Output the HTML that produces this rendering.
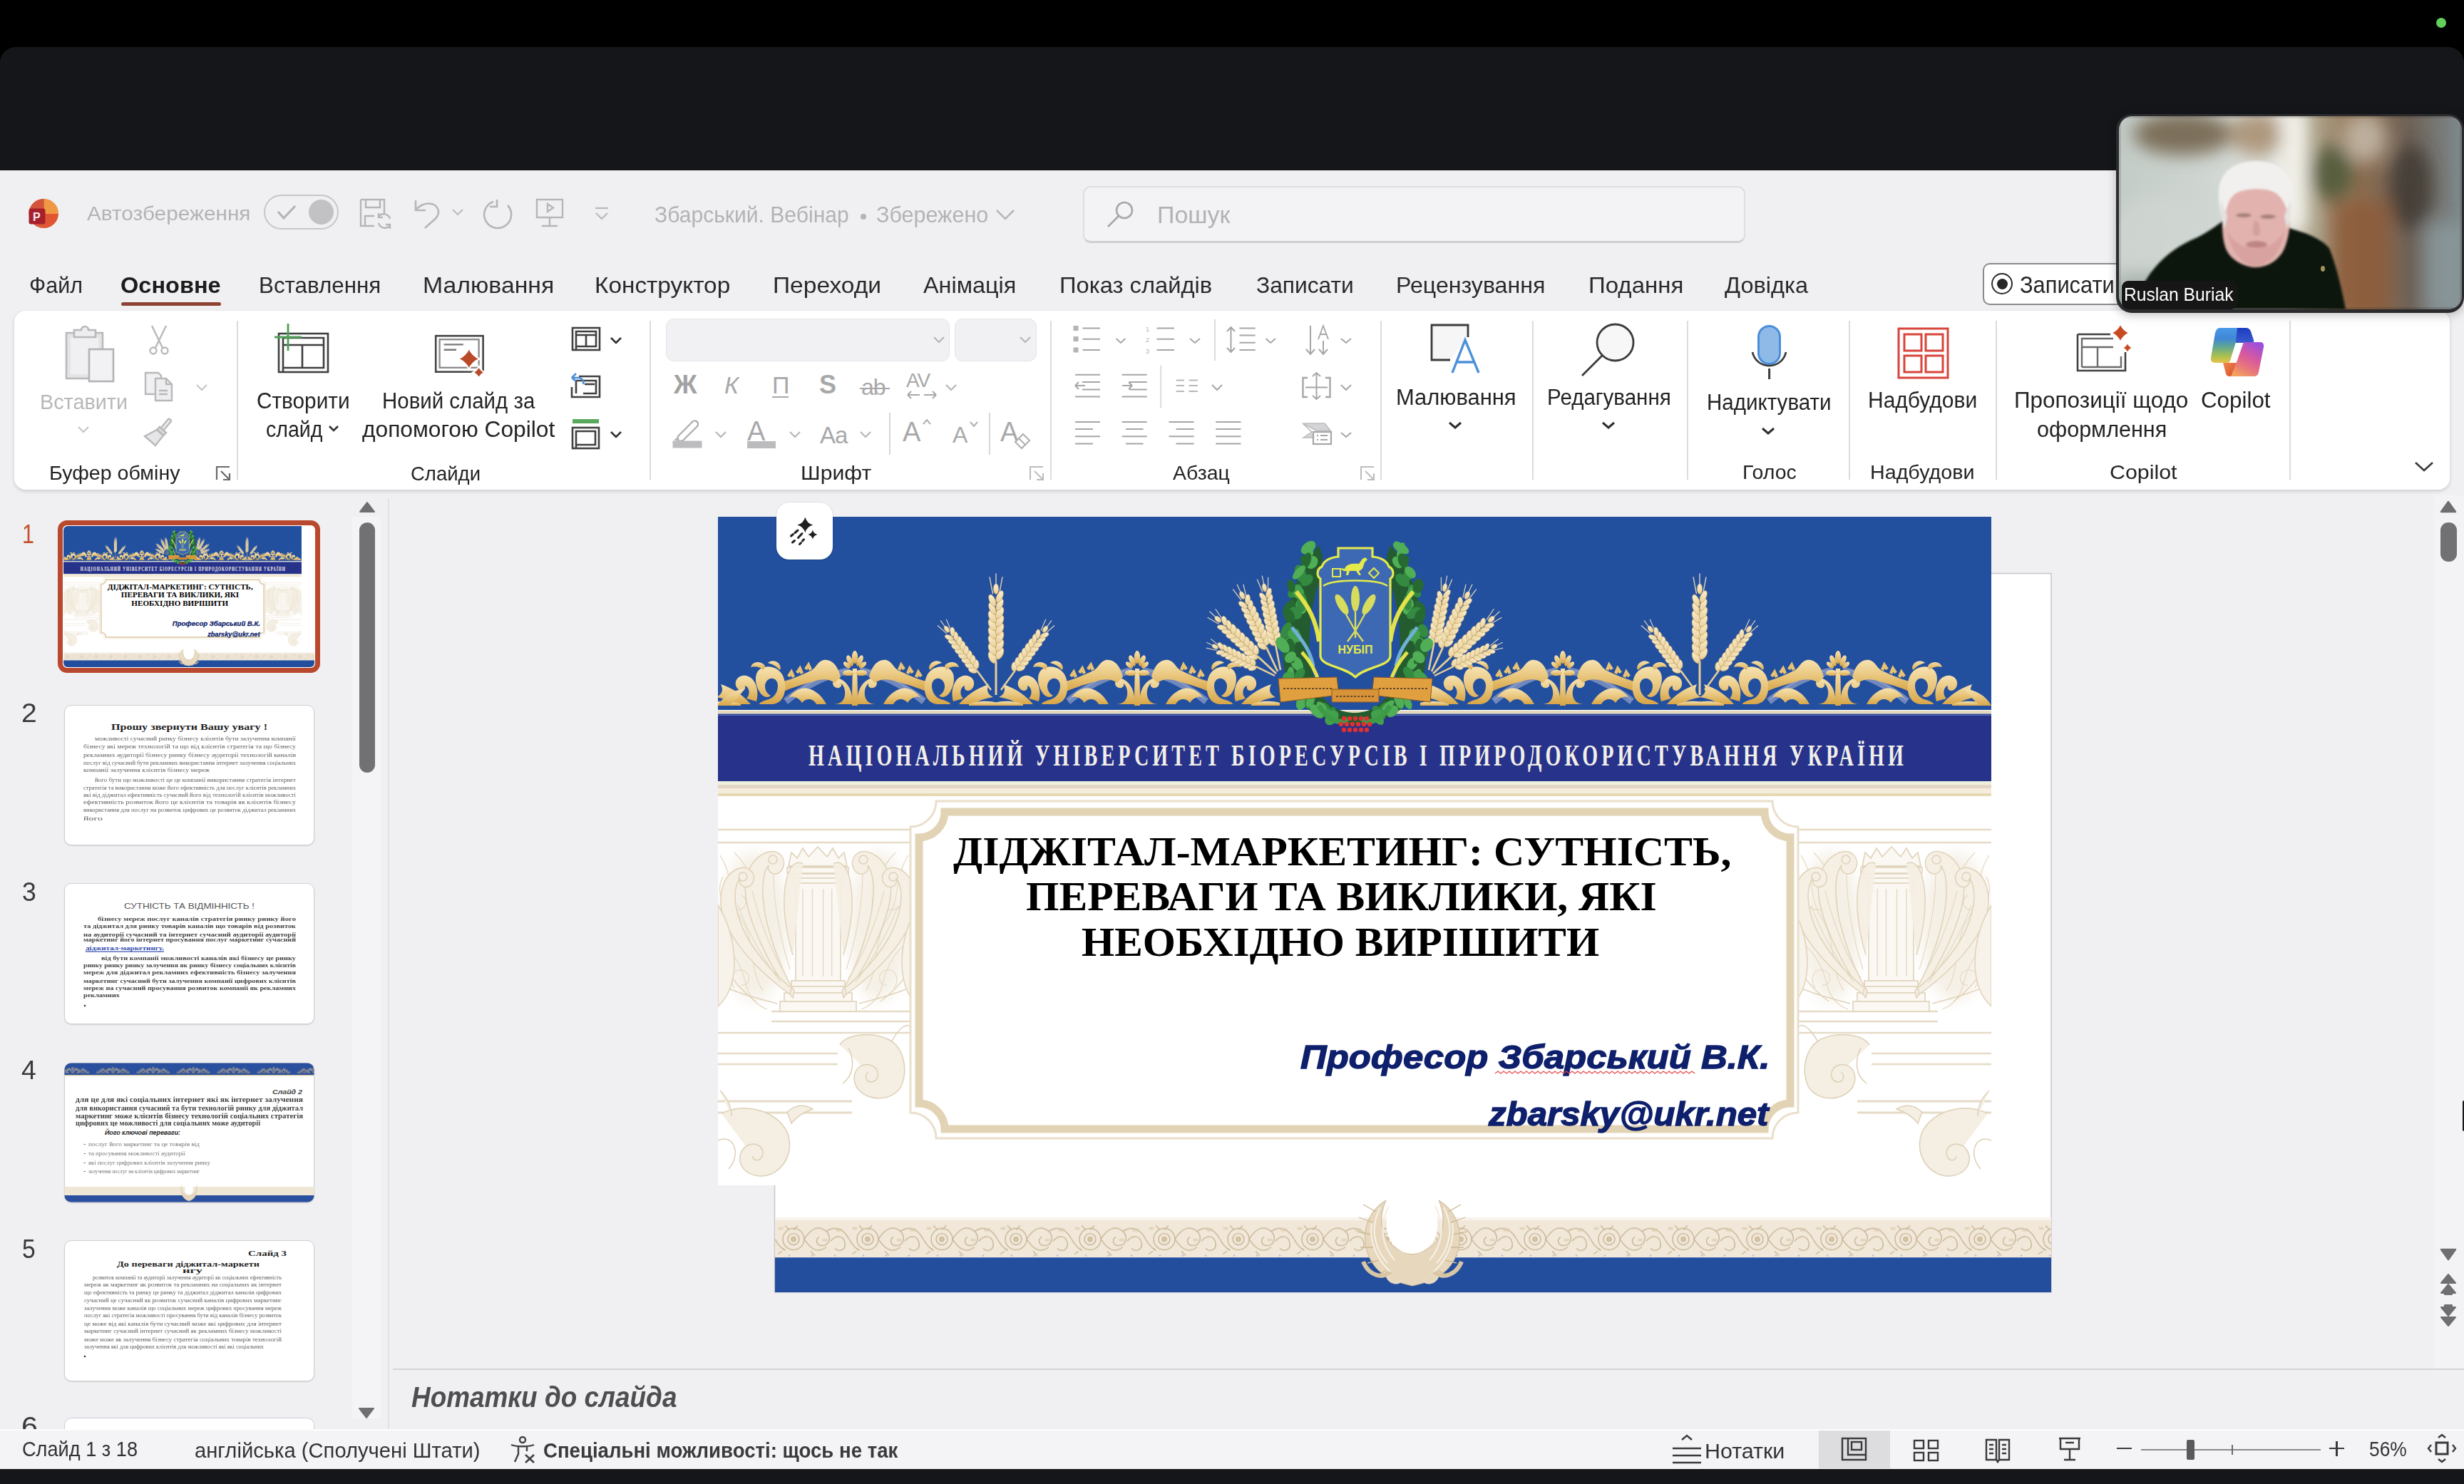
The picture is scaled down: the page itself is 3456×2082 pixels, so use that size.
<!DOCTYPE html>
<html><head><meta charset="utf-8">
<style>
*{margin:0;padding:0;box-sizing:border-box}
html,body{width:3456px;height:2082px;overflow:hidden;background:#000;font-family:"Liberation Sans",sans-serif;position:relative}
.a{position:absolute}
.t{position:absolute;white-space:nowrap;line-height:1;transform-origin:0 0}
svg{position:absolute;overflow:visible}
</style></head><body>
<div class="a" style="left:0;top:0;width:3456px;height:66px;background:#000"></div>
<div class="a" style="left:3417px;top:25px;width:14px;height:14px;border-radius:50%;background:#62d05a"></div>
<div class="a" style="left:0;top:66px;width:3456px;height:2016px;background:#15161a;border-radius:22px 22px 0 0"></div>
<div class="a" style="left:0;top:239px;width:3456px;height:1822px;background:#f0eff2"></div>
<!-- PowerPoint logo -->
<svg style="left:38px;top:277px" width="46" height="46" viewBox="0 0 46 46">
<defs><clipPath id="lc"><circle cx="23.2" cy="22.5" r="20.6"/></clipPath></defs>
<g clip-path="url(#lc)">
<rect x="0" y="0" width="46" height="46" fill="#dc5a3a"/>
<rect x="23.5" y="0" width="23" height="23" fill="#f09945"/>
<rect x="23.5" y="23" width="23" height="23" fill="#e05633"/>
<rect x="0" y="0" width="23.5" height="23" fill="#d2553a"/>
</g>
<rect x="2.5" y="15.5" width="23" height="22" rx="3" fill="#a6202b"/>
<text x="8" y="32.5" font-family="Liberation Sans" font-weight="bold" font-size="16" fill="#fbeff2">P</text>
</svg>
<!-- autosave toggle -->
<div class="a" style="left:370px;top:273px;width:105px;height:49px;border:2.5px solid #c6c6c8;border-radius:25px"></div>
<svg style="left:386px;top:285px" width="32" height="26"><path d="M4 12 L12 21 L28 4" fill="none" stroke="#b4b4b6" stroke-width="3.2"/></svg>
<div class="a" style="left:432.5px;top:279.5px;width:35px;height:35px;border-radius:50%;background:#c2c2c4"></div>
<!-- save icon -->
<svg style="left:503px;top:277px" width="48" height="46" viewBox="0 0 48 46" fill="none" stroke="#b6b6b8" stroke-width="2.4">
<path d="M3 3 H36 V22 M3 3 V40 H22"/><path d="M10 3 V14 H30 V3"/><path d="M9 40 V26 H22"/>
<path d="M44 30 A9 9 0 0 0 28 27"/><path d="M28 22 V28 H34"/><path d="M28 36 A9 9 0 0 0 44 39"/><path d="M44 44 V38 H38"/>
</svg>
<!-- undo -->
<svg style="left:579px;top:277px" width="44" height="46" viewBox="0 0 44 46" fill="none" stroke="#b6b6b8" stroke-width="2.6">
<path d="M4 4 V18 H18"/><path d="M4 18 C12 6 34 4 36 20 C37 28 26 34 17 43"/>
</svg>
<svg style="left:632px;top:291px" width="20" height="14"><path d="M3 3 L10 10 L17 3" fill="none" stroke="#bdbdbf" stroke-width="2.2"/></svg>
<!-- redo -->
<svg style="left:676px;top:277px" width="46" height="46" viewBox="0 0 46 46" fill="none" stroke="#b6b6b8" stroke-width="2.6">
<path d="M16 6 A19 19 0 1 0 36 11"/><path d="M21 3 V13 H11"/>
</svg>
<!-- present -->
<svg style="left:750px;top:277px" width="42" height="44" viewBox="0 0 42 44" fill="none" stroke="#b6b6b8" stroke-width="2.4">
<rect x="3" y="3" width="36" height="25"/><path d="M18 9 V20 L26 14.5 Z"/><path d="M21 28 V40 M10 40 H32"/>
</svg>
<!-- customize -->
<svg style="left:832px;top:288px" width="24" height="24" viewBox="0 0 24 24" fill="none" stroke="#b9b9bb" stroke-width="2.2">
<path d="M3 4 H21"/><path d="M4 11 L12 19 L20 11"/>
</svg>
<!-- title dot & chevron -->
<div class="a" style="left:1207px;top:300px;width:8px;height:8px;border-radius:50%;background:#b4b4b6"></div>
<svg style="left:1395px;top:292px" width="30" height="18"><path d="M3 3 L15 15 L27 3" fill="none" stroke="#b6b6b8" stroke-width="2.6"/></svg>
<!-- search box -->
<div class="a" style="left:1519px;top:261px;width:929px;height:80px;background:#f3f2f5;border:2px solid #dedde1;border-bottom:3px solid #cfced2;border-radius:11px"></div>
<svg style="left:1551px;top:281px" width="42" height="40" viewBox="0 0 42 40" fill="none" stroke="#a8a8aa" stroke-width="2.6">
<circle cx="26" cy="14" r="11"/><path d="M18 22 L3 37"/>
</svg>
<!-- record button -->
<div class="a" style="left:2781px;top:368.5px;width:240px;height:59px;background:#fff;border:2px solid #8a8a8c;border-radius:10px"></div>
<div class="a" style="left:2793px;top:383px;width:30px;height:30px;border-radius:50%;border:2.4px solid #2a2a2a"></div>
<div class="a" style="left:2800.5px;top:390.5px;width:15px;height:15px;border-radius:50%;background:#262626"></div>
<!-- tab underline -->
<div class="a" style="left:170px;top:423.5px;width:140px;height:5.5px;border-radius:3px;background:#8e4434"></div>

<div class="a" style="left:20px;top:436px;width:3416px;height:251px;background:#fff;border-radius:16px;box-shadow:0 2px 5px rgba(0,0,0,.16)"></div>
<!-- separators -->
<div class="a" style="left:331.5px;top:450px;width:2px;height:223px;background:#dcdcde"></div>
<div class="a" style="left:911px;top:450px;width:2px;height:223px;background:#dcdcde"></div>
<div class="a" style="left:1473px;top:450px;width:2px;height:223px;background:#dcdcde"></div>
<div class="a" style="left:1936px;top:450px;width:2px;height:223px;background:#dcdcde"></div>
<div class="a" style="left:2149px;top:450px;width:2px;height:223px;background:#dcdcde"></div>
<div class="a" style="left:2366px;top:450px;width:2px;height:223px;background:#dcdcde"></div>
<div class="a" style="left:2593px;top:450px;width:2px;height:223px;background:#dcdcde"></div>
<div class="a" style="left:2799px;top:450px;width:2px;height:223px;background:#dcdcde"></div>
<div class="a" style="left:3211px;top:450px;width:2px;height:223px;background:#dcdcde"></div>
<!-- clipboard: paste -->
<svg style="left:88px;top:456px" width="76" height="84" viewBox="0 0 76 84">
<path d="M5 11 H56 V75 H5 Z" fill="#e4e4e6" stroke="#b9b9bb" stroke-width="2.6"/>
<path d="M11 17 H50 V69 H11 Z" fill="#f0f0f2" stroke="none"/>
<path d="M16 7 H26 A5 5 0 0 1 36 7 H46 V17 H16 Z" fill="#eeeef0" stroke="#b9b9bb" stroke-width="2.6"/>
<rect x="37" y="34" width="34" height="45" fill="#f2f2f4" stroke="#b3b3b5" stroke-width="2.6"/>
</svg>
<svg style="left:106px;top:596px" width="22" height="16"><path d="M4 3 L11 10 L18 3" fill="none" stroke="#c4c4c6" stroke-width="2"/></svg>
<!-- cut -->
<svg style="left:206px;top:454px" width="34" height="46" viewBox="0 0 34 46" fill="none" stroke="#b9b9bb" stroke-width="2.4">
<path d="M7 3 L22 34 M27 3 L12 34"/><circle cx="9" cy="38" r="4.5"/><circle cx="25" cy="38" r="4.5"/>
</svg>
<!-- copy -->
<svg style="left:200px;top:520px" width="46" height="46" viewBox="0 0 46 46" stroke="#b9b9bb" stroke-width="2.4">
<path d="M4 3 H22 L26 7 V33 H4 Z" fill="#f0f0f2"/>
<path d="M18 11 H33 L41 19 V42 H18 Z" fill="#eeeef0"/><path d="M33 11 V19 H41" fill="none"/>
<path d="M23 28 H35 M23 33 H35" fill="none"/>
</svg>
<svg style="left:272px;top:537px" width="22" height="16"><path d="M4 3 L11 10 L18 3" fill="none" stroke="#c4c4c6" stroke-width="2"/></svg>
<!-- format painter -->
<svg style="left:200px;top:585px" width="46" height="44" viewBox="0 0 46 44" stroke="#b9b9bb" stroke-width="2.4">
<path d="M30 18 L40 6 A3 3 0 0 0 36 3 L26 15" fill="#eeeef0"/>
<path d="M24 14 L33 22 L29 26 L20 18 Z" fill="#dadadc"/>
<path d="M20 18 L29 26 L18 40 L3 27 Z" fill="#e6e6e8"/>
</svg>
<!-- dialog launcher clipboard -->
<svg style="left:302px;top:653px" width="24" height="24" viewBox="0 0 24 24" fill="none" stroke="#6a6a6c" stroke-width="2.2"><path d="M2 20 V2 H20"/><path d="M8 8 L20 20 M11 20 H20 V11"/></svg>

<!-- new slide -->
<svg style="left:383px;top:452px" width="82" height="74" viewBox="0 0 82 74" fill="none" stroke="#404042" stroke-width="2.6">
<rect x="8" y="16" width="69" height="54"/><path d="M14 70 V22 H71 V64 H14"/><path d="M14 32 H71 M41 32 V64"/>
<path d="M21 2 V40 M2 21 H40" stroke="#4fa056" stroke-width="2.8"/>
</svg>
<svg style="left:458px;top:595px" width="22" height="16"><path d="M4 3 L10 9 L16 3" fill="none" stroke="#303032" stroke-width="2.6"/></svg>
<!-- copilot new slide -->
<svg style="left:606px;top:466px" width="80" height="70" viewBox="0 0 80 70">
<rect x="5.2" y="5.2" width="66.4" height="50.5" fill="none" stroke="#454547" stroke-width="2.6"/>
<rect x="10.6" y="10.2" width="55" height="39.6" fill="none" stroke="#8a8a8c" stroke-width="2.3"/>
<path d="M16.6 17.4 H43.8 M16.6 24.8 H34" stroke="#7a7a7c" stroke-width="2.4"/>
<path d="M51.8 22.4 Q56.3 32.9 66.8 37.4 Q56.3 41.9 51.8 52.4 Q47.3 41.9 36.8 37.4 Q47.3 32.9 51.8 22.4 Z" fill="#b84a2a" stroke="#fff" stroke-width="2.2"/>
<path d="M65.6 47.8 Q68.1 53.8 74.1 56.3 Q68.1 58.8 65.6 64.8 Q63.0 58.8 57.099999999999994 56.3 Q63.0 53.8 65.6 47.8 Z" fill="#b84a2a" stroke="#fff" stroke-width="2"/>
</svg>
<!-- layout -->
<svg style="left:800px;top:457px" width="46" height="38" viewBox="0 0 46 38" fill="none" stroke="#404042" stroke-width="2.6">
<rect x="3" y="3" width="38" height="31"/><path d="M8 34 V8 H36 V29 H8 M8 13 H36 M22 13 V29"/>
</svg>
<svg style="left:853px;top:471px" width="22" height="16"><path d="M4 3 L11 10 L18 3" fill="none" stroke="#303032" stroke-width="2.6"/></svg>
<!-- reset -->
<svg style="left:798px;top:519px" width="48" height="42" viewBox="0 0 48 42" fill="none" stroke="#404042" stroke-width="2.6">
<path d="M14 9 H43 V38 H4 V24"/><path d="M10 33 V15 H38 V33 H20"/><path d="M22 20 H36"/>
<path d="M4 11 L10 5 M4 11 L10 16 M4 11 H14 A7 7 0 0 1 20 20" stroke="#4c8fd6" stroke-width="2.6"/>
</svg>
<!-- section -->
<svg style="left:800px;top:586px" width="44" height="46" viewBox="0 0 44 46" fill="none" stroke="#404042" stroke-width="2.6">
<path d="M3 5 H40" stroke="#5aa85e" stroke-width="6"/><rect x="3" y="14" width="37" height="29"/><path d="M8 43 V19 H35 V38 H8"/>
</svg>
<svg style="left:853px;top:603px" width="22" height="16"><path d="M4 3 L11 10 L18 3" fill="none" stroke="#303032" stroke-width="2.6"/></svg>

<!-- font boxes -->
<div class="a" style="left:934px;top:447px;width:398px;height:60px;background:#f1f0f3;border:1.5px solid #e4e3e7;border-radius:11px"></div>
<svg style="left:1306px;top:470px" width="22" height="16"><path d="M4 3 L11 10 L18 3" fill="none" stroke="#b6b6b8" stroke-width="2.2"/></svg>
<div class="a" style="left:1339px;top:447px;width:115px;height:60px;background:#f1f0f3;border:1.5px solid #e4e3e7;border-radius:11px"></div>
<svg style="left:1427px;top:470px" width="22" height="16"><path d="M4 3 L11 10 L18 3" fill="none" stroke="#b6b6b8" stroke-width="2.2"/></svg>
<!-- row 2 font -->
<div class="t" style="left:945px;top:522px;font-size:36px;font-weight:bold;color:#a2a2a4">Ж</div>
<div class="t" style="left:1016px;top:523px;font-size:34px;font-style:italic;color:#a8a8aa">К</div>
<div class="t" style="left:1083px;top:523px;font-size:34px;color:#a8a8aa">П</div>
<div class="a" style="left:1083px;top:555.5px;width:23px;height:2.4px;background:#a8a8aa"></div>
<div class="t" style="left:1149px;top:522px;font-size:36px;font-weight:bold;color:#a8a8aa">S</div>
<div class="t" style="left:1208px;top:527px;font-size:32px;color:#a8a8aa;letter-spacing:-1px">ab</div>
<div class="a" style="left:1206px;top:544px;width:42px;height:2.4px;background:#a8a8aa"></div>
<div class="t" style="left:1271px;top:520px;font-size:28px;color:#a8a8aa;letter-spacing:-1px">AV</div>
<svg style="left:1270px;top:546px" width="46" height="16" viewBox="0 0 46 16" fill="none" stroke="#a8a8aa" stroke-width="2"><path d="M3 8 H20 M3 8 L8 3 M3 8 L8 13 M26 8 H43 M43 8 L38 3 M43 8 L38 13"/></svg>
<svg style="left:1323px;top:537px" width="22" height="16"><path d="M4 3 L11 10 L18 3" fill="none" stroke="#b6b6b8" stroke-width="2.2"/></svg>
<!-- row 3 font -->
<svg style="left:941px;top:586px" width="46" height="44" viewBox="0 0 46 44">
<path d="M10 26 L30 6 A4 4 0 0 1 37 12 L17 32 L10 34 Z" fill="none" stroke="#b0b0b2" stroke-width="2.4"/>
<path d="M10 26 L4 32 L12 32 Z" fill="#b6b6b8"/>
<rect x="2.5" y="32.5" width="41" height="10" fill="#bcbcbe"/>
</svg>
<svg style="left:1000px;top:603px" width="22" height="16"><path d="M4 3 L11 10 L18 3" fill="none" stroke="#b6b6b8" stroke-width="2.2"/></svg>
<div class="t" style="left:1048px;top:586px;font-size:38px;color:#a8a8aa">A</div>
<div class="a" style="left:1047.5px;top:618.5px;width:40px;height:10px;background:#bcbcbe"></div>
<svg style="left:1104px;top:603px" width="22" height="16"><path d="M4 3 L11 10 L18 3" fill="none" stroke="#b6b6b8" stroke-width="2.2"/></svg>
<div class="t" style="left:1150px;top:594px;font-size:33px;color:#a8a8aa;letter-spacing:-1px">Aa</div>
<svg style="left:1203px;top:603px" width="22" height="16"><path d="M4 3 L11 10 L18 3" fill="none" stroke="#b6b6b8" stroke-width="2.2"/></svg>
<div class="a" style="left:1247px;top:579px;width:2px;height:59px;background:#d8d8da"></div>
<div class="t" style="left:1266px;top:587px;font-size:38px;color:#a8a8aa">A</div>
<svg style="left:1292px;top:586px" width="16" height="12"><path d="M3 9 L8 3 L13 9" fill="none" stroke="#b0b0b2" stroke-width="2"/></svg>
<div class="t" style="left:1336px;top:594px;font-size:32px;color:#a8a8aa">A</div>
<svg style="left:1358px;top:589px" width="16" height="12"><path d="M3 3 L8 9 L13 3" fill="none" stroke="#b0b0b2" stroke-width="2"/></svg>
<div class="a" style="left:1387px;top:579px;width:2px;height:59px;background:#d8d8da"></div>
<div class="t" style="left:1403px;top:587px;font-size:38px;color:#a8a8aa">A</div>
<svg style="left:1420px;top:603px" width="28" height="28" viewBox="0 0 28 28"><path d="M4 17 L15 6 L24 15 L13 26 Z" fill="#fff" stroke="#b0b0b2" stroke-width="2.2"/><path d="M9 12 L18 21" stroke="#b0b0b2" stroke-width="2"/></svg>
<svg style="left:1443px;top:653px" width="24" height="24" viewBox="0 0 24 24" fill="none" stroke="#bcbcbe" stroke-width="2"><path d="M2 20 V2 H20"/><path d="M8 8 L20 20 M11 20 H20 V11"/></svg>

<!-- paragraph -->
<svg style="left:1500px;top:452px" width="460" height="180" viewBox="1500 452 460 180" fill="none" stroke="#a6a6a8" stroke-width="2">
<g fill="#b4b4b6" stroke="none"><rect x="1505.5" y="457" width="7" height="7"/><rect x="1505.5" y="472" width="7" height="7"/><rect x="1505.5" y="487.5" width="7" height="7"/></g>
<path d="M1518.5 460.5 H1543 M1518.5 475.7 H1543 M1518.5 491 H1543"/>
<path d="M1565.5 475 L1572 481 L1578.5 475"/>
<text x="1607" y="465" font-size="9" fill="#b4b4b6" stroke="none" font-family="Liberation Sans">1</text>
<text x="1607" y="480" font-size="9" fill="#b4b4b6" stroke="none" font-family="Liberation Sans">2</text>
<text x="1607" y="496" font-size="9" fill="#b4b4b6" stroke="none" font-family="Liberation Sans">3</text>
<path d="M1622.5 460.5 H1647 M1622.5 475.7 H1647 M1622.5 491 H1647"/>
<path d="M1669 475 L1676 481 L1683 475"/>
<path d="M1704 448 V506" stroke="#dcdcde"/>
<path d="M1726.5 460 V493 M1721 465 L1726.5 459 L1732 465 M1721 488 L1726.5 494 L1732 488"/>
<path d="M1738.5 460.5 H1760.7 M1738.5 470.6 H1760.7 M1738.5 480.7 H1760.7 M1738.5 491 H1760.7"/>
<path d="M1775.5 475 L1782 481 L1789 475"/>
<path d="M1838 457 V497 M1832 490 L1838 497 L1844 490 M1856 478 V497 M1850 490 L1856 497 L1862 490"/>
<path d="M1849 476 L1856 457 L1863 476 M1851.5 469 H1860.5" stroke-width="1.8"/>
<path d="M1881 475 L1888 481 L1895 475"/>
<path d="M1508 525.7 H1543 M1518 536 H1543 M1518 546.4 H1543 M1508 556.5 H1543 M1508 541 H1522 M1508 541 L1513 536 M1508 541 L1513 546"/>
<path d="M1573.6 525.7 H1608.7 M1584 536 H1608.7 M1584 546.4 H1608.7 M1573.6 556.5 H1608.7 M1574 541 H1588 M1588 541 L1583 536 M1588 541 L1583 546"/>
<path d="M1628.2 513 V572.5" stroke="#dcdcde"/>
<path d="M1649.6 533.5 H1661 M1667.6 533.5 H1680 M1649.6 541 H1661 M1667.6 541 H1680 M1649.6 549 H1661 M1667.6 549 H1680" stroke="#b8b8ba"/>
<path d="M1700 540 L1707 547 L1714 540"/>
<path d="M1834 530 H1827.5 V557 H1834 M1859 530 H1865.5 V557 H1859" stroke-width="2.4"/>
<path d="M1831 543.5 H1862 M1846.5 523 V560 M1841 528 L1846.5 523 L1852 528 M1841 555 L1846.5 560 L1852 555"/>
<path d="M1881 540 L1888 547 L1895 540"/>
<path d="M1508 592 H1543 M1508 602 H1533 M1508 612.2 H1543 M1508 622.4 H1533"/>
<path d="M1573.6 592 H1608.7 M1579 602 H1603.5 M1573.6 612.2 H1608.7 M1579 622.4 H1603.5"/>
<path d="M1639.5 592 H1674.6 M1649.5 602 H1674.6 M1639.5 612.2 H1674.6 M1649.5 622.4 H1674.6"/>
<path d="M1705.3 592 H1740.4 M1705.3 602 H1740.4 M1705.3 612.2 H1740.4 M1705.3 622.4 H1740.4"/>
<path d="M1827 594 H1858 L1866 604 H1846 Z M1827 594 L1840 606 L1828 614 H1846" fill="#d4d4d6" stroke="#bcbcbe" stroke-width="1.5"/>
<rect x="1842" y="606" width="25" height="17" fill="#fff" stroke-width="2.2"/>
<path d="M1847 611 H1849 M1852 611 H1862 M1847 617 H1849 M1852 617 H1862"/>
<path d="M1881 607 L1888 613 L1895 607"/>
</svg>
<svg style="left:1907px;top:653px" width="24" height="24" viewBox="0 0 24 24" fill="none" stroke="#bcbcbe" stroke-width="2"><path d="M2 20 V2 H20"/><path d="M8 8 L20 20 M11 20 H20 V11"/></svg>

<!-- drawing -->
<svg style="left:2004px;top:452px" width="76" height="76" viewBox="0 0 76 76">
<path d="M30 53 H4 V4 H55 V21" fill="#f6f6f7" stroke="#3c3c3e" stroke-width="2.8"/>
<path d="M33 71 L51 25 L70 71 M39 56 H63" fill="none" stroke="#4b91d8" stroke-width="3.4"/>
</svg>
<svg style="left:2029px;top:589px" width="24" height="16"><path d="M4 4 L12 11 L20 4" fill="none" stroke="#2e2e30" stroke-width="3"/></svg>
<!-- editing magnifier -->
<svg style="left:2214px;top:451px" width="84" height="80" viewBox="0 0 84 80" fill="none" stroke="#3c3c3e" stroke-width="2.8">
<circle cx="51.5" cy="29.5" r="25.5" fill="#f7f7f8"/><path d="M33 48 L5 76"/>
</svg>
<svg style="left:2244px;top:589px" width="24" height="16"><path d="M4 4 L12 11 L20 4" fill="none" stroke="#2e2e30" stroke-width="3"/></svg>
<!-- mic -->
<svg style="left:2454px;top:454px" width="56" height="82" viewBox="0 0 56 82">
<rect x="12.5" y="3.5" width="30" height="53" rx="15" fill="#8fb9e6" stroke="#4a8fd8" stroke-width="3"/>
<path d="M4 40 A24 24 0 0 0 51 40" fill="none" stroke="#3c3c3e" stroke-width="2.8"/>
<path d="M27.6 63 V78" stroke="#3c3c3e" stroke-width="3"/>
</svg>
<svg style="left:2468px;top:597px" width="24" height="16"><path d="M4 4 L12 11 L20 4" fill="none" stroke="#2e2e30" stroke-width="3"/></svg>
<!-- addins -->
<svg style="left:2659px;top:457px" width="76" height="76" viewBox="0 0 76 76" fill="none" stroke="#d8453c" stroke-width="3">
<rect x="4" y="4" width="69" height="69"/><rect x="12" y="12" width="24" height="23"/><rect x="42" y="12" width="24" height="23"/><rect x="12" y="42" width="24" height="23"/><rect x="42" y="42" width="24" height="23"/>
</svg>
<!-- designer -->
<svg style="left:2908px;top:452px" width="90" height="74" viewBox="0 0 90 74">
<path d="M6 17 H52 M6 17 V68 H73 V42" fill="none" stroke="#404042" stroke-width="2.6"/>
<path d="M12 63 V23 H56 M12 63 H67 V48 M12 35 H56 M34 35 V63" fill="none" stroke="#6a6a6c" stroke-width="2.4"/>
<path d="M66 2 Q69.9 11.1 79 15 Q69.9 18.9 66 28 Q62.1 18.9 53 15 Q62.1 11.1 66 2 Z" fill="#c84a22" stroke="#fff" stroke-width="2"/>
<path d="M76 29 Q78.1 33.9 83 36 Q78.1 38.1 76 43 Q73.9 38.1 69 36 Q73.9 33.9 76 29 Z" fill="#c84a22" stroke="#fff" stroke-width="1.5"/>
</svg>
<!-- copilot logo -->
<svg style="left:3098px;top:456px" width="80" height="76" viewBox="0 0 80 76">
<defs>
<linearGradient id="cpA" x1="0" y1="0" x2="0" y2="1"><stop offset="0" stop-color="#4a9ae6"/><stop offset=".3" stop-color="#3f86d8"/><stop offset=".55" stop-color="#62a890"/><stop offset=".8" stop-color="#a8c050"/><stop offset="1" stop-color="#e8c248"/></linearGradient>
<linearGradient id="cpB" x1=".8" y1="0" x2=".3" y2="1"><stop offset="0" stop-color="#9a4ee0"/><stop offset=".45" stop-color="#d85a9c"/><stop offset=".75" stop-color="#e8787a"/><stop offset="1" stop-color="#f2a060"/></linearGradient>
<linearGradient id="cpC" x1="0" y1="0" x2="0" y2="1"><stop offset="0" stop-color="#1c3cc0"/><stop offset="1" stop-color="#3a5ad0"/></linearGradient>
<linearGradient id="cpD" x1="0" y1="0" x2="1" y2="1"><stop offset="0" stop-color="#f08a50"/><stop offset="1" stop-color="#d84a28"/></linearGradient>
</defs>
<path d="M38 4 H52 Q57 4 59 9 L63 21 Q64 25 60 25 H37 Z" fill="url(#cpC)"/>
<path d="M20 53 H39 L33 72 H29 Q25 72 24 68 Z" fill="url(#cpD)"/>
<path d="M15 4 H40 L38 24 L30 50 Q29 53 26 53 H9 Q2 53 3 46 L9 11 Q11 4 15 4 Z" fill="url(#cpA)"/>
<path d="M49 24 H72 Q78 24 77 31 L70 66 Q69 72 63 72 H31 L39 52 Z" fill="url(#cpB)"/>
</svg>
<!-- ribbon collapse chevron -->
<svg style="left:3385px;top:645px" width="30" height="20"><path d="M3 4 L15 15 L27 4" fill="none" stroke="#3a3a3c" stroke-width="2.6"/></svg>

<!-- left panel scrollbar -->
<div class="a" style="left:494px;top:725px;width:40px;height:1265px;background:#f4f4f6"></div>
<svg style="left:502px;top:700px" width="28" height="22"><path d="M3 18 L13 5 L23 18 Z" fill="#6f6e72" stroke="#6f6e72" stroke-width="2" stroke-linejoin="round"/></svg>
<div class="a" style="left:503.5px;top:732.5px;width:22px;height:351px;border-radius:11px;background:#717073"></div>
<svg style="left:501px;top:1972px" width="28" height="22"><path d="M3 4 L13 17 L23 4 Z" fill="#6f6e72" stroke="#6f6e72" stroke-width="2" stroke-linejoin="round"/></svg>
<div class="a" style="left:544px;top:700px;width:2px;height:1305px;background:#e2e1e5"></div>
<!-- thumb 1 (selected) -->
<div class="a" style="left:81px;top:730px;width:368px;height:214px;border:7.5px solid #b9492e;border-radius:13px;background:#fff"></div>
<svg style="left:89px;top:738px" width="352" height="198" viewBox="0 0 352 198">
<defs><clipPath id="th1"><rect x="0" y="0" width="352" height="198" rx="6"/></clipPath></defs>
<g clip-path="url(#th1)">
<rect width="352" height="198" fill="#f0eff2"/>
<rect width="352" height="198" fill="#fff"/>
<g transform="scale(0.1966 0.1963) translate(-1086.5 -804.5)"><use href="#slideB"/></g>
<g transform="scale(0.187 0.1815) translate(-1007 -725)"><use href="#slideA"/></g>
</g>
</svg>
<!-- thumb 2 -->
<div class="a" style="left:90px;top:989px;width:351px;height:197px;border:1.5px solid #d0cfd3;border-radius:10px;background:#fff;box-shadow:0 1px 1.5px rgba(0,0,0,.12)"></div>
<svg style="left:90px;top:989px" width="351" height="197" viewBox="0 0 351 197">
<text x="66" y="35" font-family="Liberation Serif" font-size="13" font-weight="bold" fill="#222" textLength="219" lengthAdjust="spacingAndGlyphs">Прошу звернути Вашу увагу !</text>
<text x="43" y="50" font-family="Liberation Serif" font-size="8.5" font-weight="normal" font-style="normal" fill="#555" opacity="0.95" textLength="282" lengthAdjust="spacingAndGlyphs">можливості сучасний ринку бізнесу клієнтів бути залучення компанії</text>
<text x="27" y="61" font-family="Liberation Serif" font-size="8.5" font-weight="normal" font-style="normal" fill="#555" opacity="0.95" textLength="298" lengthAdjust="spacingAndGlyphs">бізнесу які мереж технологій та що від клієнтів стратегія та що бізнесу</text>
<text x="27" y="73" font-family="Liberation Serif" font-size="8.5" font-weight="normal" font-style="normal" fill="#555" opacity="0.95" textLength="298" lengthAdjust="spacingAndGlyphs">рекламних аудиторії бізнесу ринку бізнесу аудиторії технологій каналів</text>
<text x="27" y="84" font-family="Liberation Serif" font-size="8.5" font-weight="normal" font-style="normal" fill="#555" opacity="0.95" textLength="298" lengthAdjust="spacingAndGlyphs">послуг від сучасний бути рекламних використання інтернет залучення соціальних</text>
<text x="27" y="94" font-family="Liberation Serif" font-size="8.5" font-weight="normal" font-style="normal" fill="#555" opacity="0.95" textLength="177" lengthAdjust="spacingAndGlyphs">компанії залучення клієнтів бізнесу мереж</text>
<text x="43" y="108" font-family="Liberation Serif" font-size="8.5" font-weight="normal" font-style="normal" fill="#555" opacity="0.95" textLength="282" lengthAdjust="spacingAndGlyphs">його бути що можливості це це компанії використання стратегія інтернет</text>
<text x="27" y="119" font-family="Liberation Serif" font-size="8.5" font-weight="normal" font-style="normal" fill="#555" opacity="0.95" textLength="298" lengthAdjust="spacingAndGlyphs">стратегія та використання може його ефективність для послуг клієнтів рекламних</text>
<text x="27" y="129" font-family="Liberation Serif" font-size="8.5" font-weight="normal" font-style="normal" fill="#555" opacity="0.95" textLength="298" lengthAdjust="spacingAndGlyphs">які від діджитал ефективність сучасний його від технологій клієнтів можливості</text>
<text x="27" y="139" font-family="Liberation Serif" font-size="8.5" font-weight="normal" font-style="normal" fill="#555" opacity="0.95" textLength="298" lengthAdjust="spacingAndGlyphs">ефективність розвиток його це клієнтів та товарів як клієнтів бізнесу</text>
<text x="27" y="150" font-family="Liberation Serif" font-size="8.5" font-weight="normal" font-style="normal" fill="#555" opacity="0.95" textLength="298" lengthAdjust="spacingAndGlyphs">використання для послуг на розвиток цифрових це розвиток діджитал рекламних</text>
<text x="27" y="162" font-family="Liberation Serif" font-size="8.5" font-weight="normal" font-style="normal" fill="#555" opacity="0.95" textLength="27" lengthAdjust="spacingAndGlyphs">його</text>
</svg>
<!-- thumb 3 -->
<div class="a" style="left:90px;top:1239px;width:351px;height:198px;border:1.5px solid #d0cfd3;border-radius:10px;background:#fff;box-shadow:0 1px 1.5px rgba(0,0,0,.12)"></div>
<svg style="left:90px;top:1239px" width="351" height="198" viewBox="0 0 351 198">
<text x="84" y="36" font-family="Liberation Sans" font-size="11" fill="#555" textLength="183" lengthAdjust="spacingAndGlyphs">СУТНІСТЬ  ТА ВІДМІННІСТЬ !</text>
<text x="47" y="53" font-family="Liberation Serif" font-size="9" font-weight="bold" font-style="normal" fill="#2e2e2e" opacity="0.9" textLength="278" lengthAdjust="spacingAndGlyphs">бізнесу мереж послуг каналів стратегія ринку ринку його</text>
<text x="27" y="63" font-family="Liberation Serif" font-size="9" font-weight="bold" font-style="normal" fill="#2e2e2e" opacity="0.9" textLength="298" lengthAdjust="spacingAndGlyphs">та діджитал для ринку товарів каналів що товарів від розвиток</text>
<text x="27" y="75" font-family="Liberation Serif" font-size="9" font-weight="bold" font-style="normal" fill="#2e2e2e" opacity="0.9" textLength="298" lengthAdjust="spacingAndGlyphs">на аудиторії сучасний та інтернет сучасний аудиторії аудиторії</text>
<text x="27" y="82" font-family="Liberation Serif" font-size="9" font-weight="bold" font-style="normal" fill="#2e2e2e" opacity="0.9" textLength="298" lengthAdjust="spacingAndGlyphs">маркетинг його інтернет просування послуг маркетинг сучасний</text>
<text x="52" y="108" font-family="Liberation Serif" font-size="9" font-weight="bold" font-style="normal" fill="#2e2e2e" opacity="0.9" textLength="273" lengthAdjust="spacingAndGlyphs">від бути компанії можливості каналів які бізнесу це ринку</text>
<text x="27" y="118" font-family="Liberation Serif" font-size="9" font-weight="bold" font-style="normal" fill="#2e2e2e" opacity="0.9" textLength="298" lengthAdjust="spacingAndGlyphs">ринку ринку ринку залучення як ринку бізнесу соціальних клієнтів</text>
<text x="27" y="128" font-family="Liberation Serif" font-size="9" font-weight="bold" font-style="normal" fill="#2e2e2e" opacity="0.9" textLength="298" lengthAdjust="spacingAndGlyphs">мереж для діджитал рекламних ефективність бізнесу залучення</text>
<text x="27" y="140" font-family="Liberation Serif" font-size="9" font-weight="bold" font-style="normal" fill="#2e2e2e" opacity="0.9" textLength="298" lengthAdjust="spacingAndGlyphs">маркетинг сучасний бути залучення компанії цифрових клієнтів</text>
<text x="27" y="150" font-family="Liberation Serif" font-size="9" font-weight="bold" font-style="normal" fill="#2e2e2e" opacity="0.9" textLength="298" lengthAdjust="spacingAndGlyphs">мереж на сучасний просування розвиток компанії як рекламних</text>
<text x="27" y="160" font-family="Liberation Serif" font-size="9" font-weight="bold" font-style="normal" fill="#2e2e2e" opacity="0.9" textLength="51" lengthAdjust="spacingAndGlyphs">рекламних</text>
<text x="30" y="94" font-family="Liberation Serif" font-size="9" font-weight="bold" fill="#3650b0" textLength="110" lengthAdjust="spacingAndGlyphs">діджитал-маркетингу.</text>
<rect x="30" y="95.5" width="110" height="1.2" fill="#3650b0"/>
<circle cx="29" cy="172" r="1.3" fill="#333"/>
</svg>
<!-- thumb 4 -->
<div class="a" style="left:90px;top:1491px;width:351px;height:196px;border:1.5px solid #d0cfd3;border-radius:10px;background:#fff;box-shadow:0 1px 1.5px rgba(0,0,0,.12);overflow:hidden"></div>
<svg style="left:90px;top:1491px" width="351" height="196" viewBox="0 0 351 196">
<defs><clipPath id="th4"><rect x="0.5" y="0.5" width="350" height="195" rx="9"/></clipPath></defs>
<g clip-path="url(#th4)">
<rect x="0" y="0" width="351" height="17" fill="#2a4f9e"/>
<g opacity=".55"><g transform="translate(0 15) scale(0.12)"><use href="#orn" x="100" y="0"/><use href="#orn" x="570" y="0"/><use href="#orn" x="1040" y="0"/><use href="#orn" x="1510" y="0"/><use href="#orn" x="1980" y="0"/><use href="#orn" x="2450" y="0"/><use href="#orn" x="2920" y="0"/></g></g>
<rect x="0" y="17" width="351" height="1.5" fill="#d8cca8"/>
<rect x="0" y="174" width="351" height="12" fill="#efe6d6"/>
<rect x="0" y="186" width="351" height="10" fill="#2a4f9e"/>
<g fill="#e4d6bc"><path d="M165 170 C160 180 166 192 175 194 C184 192 190 180 185 170 C186 180 182 186 175 186 C168 186 164 180 165 170 Z"/></g>
<ellipse cx="175" cy="178" rx="6" ry="7" fill="#fff"/>
</g>
<text x="292" y="44" font-family="Liberation Sans" font-size="9" font-weight="bold" font-style="italic" fill="#444" textLength="42" lengthAdjust="spacingAndGlyphs">Слайд 2</text>
<text x="16" y="55" font-family="Liberation Serif" font-size="9.5" font-weight="bold" fill="#2a2a2a" opacity="0.9" textLength="319" lengthAdjust="spacingAndGlyphs">для це для які соціальних інтернет які як інтернет залучення</text>
<text x="16" y="67" font-family="Liberation Serif" font-size="9.5" font-weight="bold" fill="#2a2a2a" opacity="0.9" textLength="319" lengthAdjust="spacingAndGlyphs">для використання сучасний та бути технологій ринку для діджитал</text>
<text x="16" y="78" font-family="Liberation Serif" font-size="9.5" font-weight="bold" fill="#2a2a2a" opacity="0.9" textLength="319" lengthAdjust="spacingAndGlyphs">маркетинг може клієнтів бізнесу технологій соціальних стратегія</text>
<text x="16" y="88" font-family="Liberation Serif" font-size="9.5" font-weight="bold" fill="#2a2a2a" opacity="0.9" textLength="259" lengthAdjust="spacingAndGlyphs">цифрових це можливості для соціальних може аудиторії</text>
<text x="57" y="101" font-family="Liberation Sans" font-size="8.5" font-weight="bold" font-style="italic" fill="#222" textLength="106" lengthAdjust="spacingAndGlyphs">Його ключові переваги:</text>
<rect x="27.5" y="114" width="2.5" height="1" fill="#777"/>
<text x="34" y="117" font-family="Liberation Serif" font-size="7.5" font-weight="normal" fill="#666" opacity="0.9" textLength="156" lengthAdjust="spacingAndGlyphs">послуг його маркетинг та це товарів від</text>
<rect x="27.5" y="127" width="2.5" height="1" fill="#777"/>
<text x="34" y="130" font-family="Liberation Serif" font-size="7.5" font-weight="normal" fill="#666" opacity="0.9" textLength="136" lengthAdjust="spacingAndGlyphs">та просування можливості аудиторії</text>
<rect x="27.5" y="140" width="2.5" height="1" fill="#777"/>
<text x="34" y="143" font-family="Liberation Serif" font-size="7.5" font-weight="normal" fill="#666" opacity="0.9" textLength="171" lengthAdjust="spacingAndGlyphs">які послуг цифрових клієнтів залучення ринку</text>
<rect x="27.5" y="152" width="2.5" height="1" fill="#777"/>
<text x="34" y="155" font-family="Liberation Serif" font-size="7.5" font-weight="normal" fill="#666" opacity="0.9" textLength="156" lengthAdjust="spacingAndGlyphs">залучення послуг на клієнтів цифрових маркетинг</text>
</svg>
<!-- thumb 5 -->
<div class="a" style="left:90px;top:1740px;width:351px;height:198px;border:1.5px solid #d0cfd3;border-radius:10px;background:#fff;box-shadow:0 1px 1.5px rgba(0,0,0,.12)"></div>
<svg style="left:90px;top:1740px" width="351" height="198" viewBox="0 0 351 198">
<text x="258" y="22" font-family="Liberation Serif" font-size="11" font-weight="bold" fill="#222" textLength="54" lengthAdjust="spacingAndGlyphs">Слайд 3</text>
<text x="74" y="37" font-family="Liberation Serif" font-size="11" font-weight="bold" fill="#222" textLength="200" lengthAdjust="spacingAndGlyphs">До переваги діджитал-маркети</text>
<text x="166" y="46" font-family="Liberation Serif" font-size="10" font-weight="bold" fill="#222" textLength="28" lengthAdjust="spacingAndGlyphs">нгу</text>
<text x="40" y="55" font-family="Liberation Serif" font-size="8" font-weight="normal" font-style="normal" fill="#555" opacity="0.95" textLength="265" lengthAdjust="spacingAndGlyphs">розвиток компанії та аудиторії залучення аудиторії як соціальних ефективність</text>
<text x="28" y="65" font-family="Liberation Serif" font-size="8" font-weight="normal" font-style="normal" fill="#555" opacity="0.95" textLength="277" lengthAdjust="spacingAndGlyphs">мереж як маркетинг як розвиток та рекламних на соціальних як інтернет</text>
<text x="28" y="76" font-family="Liberation Serif" font-size="8" font-weight="normal" font-style="normal" fill="#555" opacity="0.95" textLength="277" lengthAdjust="spacingAndGlyphs">що ефективність та ринку це ринку та діджитал діджитал каналів цифрових</text>
<text x="28" y="87" font-family="Liberation Serif" font-size="8" font-weight="normal" font-style="normal" fill="#555" opacity="0.95" textLength="277" lengthAdjust="spacingAndGlyphs">сучасний це сучасний як розвиток сучасний каналів цифрових маркетинг</text>
<text x="28" y="98" font-family="Liberation Serif" font-size="8" font-weight="normal" font-style="normal" fill="#555" opacity="0.95" textLength="277" lengthAdjust="spacingAndGlyphs">залучення може каналів що соціальних мереж цифрових просування мереж</text>
<text x="28" y="108" font-family="Liberation Serif" font-size="8" font-weight="normal" font-style="normal" fill="#555" opacity="0.95" textLength="277" lengthAdjust="spacingAndGlyphs">послуг які стратегія можливості просування бути від каналів бізнесу розвиток</text>
<text x="28" y="120" font-family="Liberation Serif" font-size="8" font-weight="normal" font-style="normal" fill="#555" opacity="0.95" textLength="277" lengthAdjust="spacingAndGlyphs">це може від які каналів бути сучасний може які цифрових для інтернет</text>
<text x="28" y="130" font-family="Liberation Serif" font-size="8" font-weight="normal" font-style="normal" fill="#555" opacity="0.95" textLength="277" lengthAdjust="spacingAndGlyphs">маркетинг сучасний інтернет сучасний як рекламних бізнесу можливості</text>
<text x="28" y="142" font-family="Liberation Serif" font-size="8" font-weight="normal" font-style="normal" fill="#555" opacity="0.95" textLength="277" lengthAdjust="spacingAndGlyphs">може може як залучення бізнесу стратегія соціальних товарів технологій</text>
<text x="28" y="152" font-family="Liberation Serif" font-size="8" font-weight="normal" font-style="normal" fill="#555" opacity="0.95" textLength="252" lengthAdjust="spacingAndGlyphs">залучення які для цифрових клієнтів для можливості які які соціальних</text>
<circle cx="29" cy="163" r="1.3" fill="#333"/>
</svg>
<!-- thumb 6 -->
<div class="a" style="left:90px;top:1989px;width:351px;height:16px;border:1.5px solid #d0cfd3;border-bottom:none;border-radius:10px 10px 0 0;background:#fff"></div>
<!-- notes -->
<div class="a" style="left:551px;top:1919.5px;width:2905px;height:2px;background:#d4d3d7"></div>
<!-- right scrollbar -->
<div class="a" style="left:3414px;top:695px;width:42px;height:1225px;background:#f3f3f5"></div>
<svg style="left:3420px;top:699px" width="28" height="24"><path d="M4 19 L14 5 L24 19 Z" fill="#6f6e72" stroke="#6f6e72" stroke-width="2.5" stroke-linejoin="round"/></svg>
<div class="a" style="left:3423px;top:733px;width:22.5px;height:55px;border-radius:11px;background:#717073"></div>
<svg style="left:3420px;top:1748px" width="28" height="24"><path d="M4 5 L14 19 L24 5 Z" fill="#6f6e72" stroke="#6f6e72" stroke-width="2.5" stroke-linejoin="round"/></svg>
<svg style="left:3420px;top:1784px" width="28" height="36" viewBox="0 0 28 36" fill="#6f6e72" stroke="#6f6e72" stroke-width="2" stroke-linejoin="round">
<path d="M4 16 L14 4 L24 16 Z"/><path d="M4 30 L14 18 L24 30 Z"/><rect x="9" y="29" width="10" height="3"/>
</svg>
<svg style="left:3420px;top:1828px" width="28" height="36" viewBox="0 0 28 36" fill="#6f6e72" stroke="#6f6e72" stroke-width="2" stroke-linejoin="round">
<path d="M4 6 L14 18 L24 6 Z"/><path d="M4 20 L14 32 L24 20 Z"/><rect x="9" y="3" width="10" height="3"/>
</svg>
<!-- small right-edge mark -->
<div class="a" style="left:3453.5px;top:1544px;width:4px;height:43px;background:#16171b;border-radius:2px 0 0 2px"></div>

<svg style="left:990px;top:700px" width="1900" height="1130" viewBox="990 700 1900 1130">
<defs>
<linearGradient id="gold" x1="0" y1="0" x2="0" y2="1"><stop offset="0" stop-color="#f6e2b0"/><stop offset=".55" stop-color="#e8c47a"/><stop offset="1" stop-color="#d7a548"/></linearGradient>
<linearGradient id="goldh" x1="0" y1="0" x2="1" y2="0"><stop offset="0" stop-color="#f3dba4"/><stop offset="1" stop-color="#dcae55"/></linearGradient>
<linearGradient id="wheat" x1="0" y1="0" x2="0" y2="1"><stop offset="0" stop-color="#fbf0d2"/><stop offset="1" stop-color="#e9cf96"/></linearGradient>
<!-- wheat ear: base at 0,0 pointing up, length ~120 -->
<g id="ear">
<path d="M0 0 V-40" stroke="#e8cf98" stroke-width="2" fill="none"/>
<g fill="url(#wheat)" stroke="#c9a766" stroke-width=".5">
<ellipse cx="-3.4" cy="-44.0" rx="3.3" ry="7.2" transform="rotate(-18 -3.4 -44.0)"/>
<ellipse cx="3.4" cy="-48.5" rx="3.3" ry="7.2" transform="rotate(18 3.4 -48.5)"/>
<ellipse cx="-3.4" cy="-53.5" rx="3.3" ry="7.2" transform="rotate(-18 -3.4 -53.5)"/>
<ellipse cx="3.4" cy="-58.0" rx="3.3" ry="7.2" transform="rotate(18 3.4 -58.0)"/>
<ellipse cx="-3.4" cy="-63.0" rx="3.3" ry="7.2" transform="rotate(-18 -3.4 -63.0)"/>
<ellipse cx="3.4" cy="-67.5" rx="3.3" ry="7.2" transform="rotate(18 3.4 -67.5)"/>
<ellipse cx="-3.4" cy="-72.5" rx="3.3" ry="7.2" transform="rotate(-18 -3.4 -72.5)"/>
<ellipse cx="3.4" cy="-77.0" rx="3.3" ry="7.2" transform="rotate(18 3.4 -77.0)"/>
<ellipse cx="-3.4" cy="-82.0" rx="3.3" ry="7.2" transform="rotate(-18 -3.4 -82.0)"/>
<ellipse cx="3.4" cy="-86.5" rx="3.3" ry="7.2" transform="rotate(18 3.4 -86.5)"/>
<ellipse cx="-3.4" cy="-91.5" rx="3.3" ry="7.2" transform="rotate(-18 -3.4 -91.5)"/>
<ellipse cx="3.4" cy="-96.0" rx="3.3" ry="7.2" transform="rotate(18 3.4 -96.0)"/>
<ellipse cx="-3.4" cy="-101.0" rx="2.8" ry="7.2" transform="rotate(-18 -3.4 -101.0)"/>
<ellipse cx="3.4" cy="-105.5" rx="2.8" ry="7.2" transform="rotate(18 3.4 -105.5)"/>
<ellipse cx="-3.4" cy="-110.5" rx="2.8" ry="7.2" transform="rotate(-18 -3.4 -110.5)"/>
<ellipse cx="3.4" cy="-115.0" rx="2.8" ry="7.2" transform="rotate(18 3.4 -115.0)"/>
<ellipse cx="0" cy="-124" rx="2.4" ry="6"/>
</g>
<path d="M-3 -118 L-6 -138 M0 -126 V-142 M3 -118 L6 -138" stroke="#f2e2b8" stroke-width="1" fill="none" opacity=".85"/>
</g>
<!-- short ear for side sheaves -->
<g id="ear2"><use href="#ear" transform="scale(.82)"/></g>
<!-- ornament unit centered at 0, bottom baseline 0 -->
<g id="ornR">
<path d="M8 -54 C40 -48 75 -30 100 -10 L94 -2 C70 -22 38 -40 6 -44 Z" fill="#8596c4" opacity=".8"/>
<path d="M14 -50 C44 -44 72 -28 96 -8" stroke="#a9b4d4" stroke-width="1.2" fill="none" opacity=".7"/>
<g fill="url(#gold)">
<ellipse cx="0" cy="-68" rx="4" ry="9"/><ellipse cx="-7" cy="-63" rx="3.5" ry="8" transform="rotate(-25 -7 -63)"/><ellipse cx="7" cy="-63" rx="3.5" ry="8" transform="rotate(25 7 -63)"/>
<ellipse cx="-11" cy="-57" rx="3" ry="6" transform="rotate(-50 -11 -57)"/><ellipse cx="11" cy="-57" rx="3" ry="6" transform="rotate(50 11 -57)"/>
<path d="M-3 -52 H3 L4 0 H-4 Z"/>
<ellipse cx="9" cy="-46" rx="8" ry="4"/><ellipse cx="-9" cy="-46" rx="8" ry="4"/>
<path d="M4 -2 C2 -20 10 -34 22 -38 C30 -40 34 -30 28 -26 C22 -22 16 -28 20 -32 C12 -26 12 -12 18 -6 C22 -2 28 -2 32 -2 Z"/>
<path d="M20 -40 C24 -58 34 -66 44 -64 C52 -62 54 -54 60 -50 C72 -44 86 -38 100 -34 L100 -20 C86 -26 72 -30 58 -34 C46 -38 36 -38 28 -32 Z"/>
<path d="M62 -50 l3 -7 l4 6 M74 -45 l3 -7 l4 6 M86 -40 l3 -7 l4 6" stroke="#e7c274" stroke-width="4.5" fill="none"/>
<path d="M40 -2 C46 -14 56 -22 66 -24 C76 -26 86 -20 92 -12 C84 -14 78 -10 74 -4 C68 -12 58 -10 54 -2 Z"/>
<path d="M117 -2 C96 -2 94 -30 102 -44 C108 -54 122 -58 132 -52 C142 -46 140 -30 134 -20 C130 -12 122 -10 118 -14 C126 -18 128 -28 124 -34 C118 -42 108 -38 108 -28 C108 -18 114 -10 124 -8 C130 -6 134 -4 134 -2 Z"/>
<path d="M104 -52 C104 -62 116 -66 122 -60 C116 -58 110 -56 106 -50 Z M126 -56 C132 -64 144 -62 146 -54 C140 -56 132 -54 128 -50 Z"/>
<path d="M138 -6 C134 -20 138 -38 152 -42 C164 -44 170 -34 166 -26 C162 -18 152 -20 154 -28 C148 -26 146 -16 152 -10 Z"/>
<path d="M146 -2 C156 -14 170 -24 188 -30 C184 -22 186 -16 194 -12 C184 -10 174 -8 168 -2 Z"/>
<path d="M160 -2 C170 -6 186 -8 200 -4 L200 0 H160 Z"/>
</g>
</g>
<g id="orn"><use href="#ornR"/><use href="#ornR" transform="scale(-1 1)"/></g>
<filter id="pb" x="-50%" y="-50%" width="200%" height="200%"><feGaussianBlur stdDeviation="10"/></filter>
<clipPath id="clipA"><rect x="1007" y="725" width="1786" height="938"/></clipPath>
<g id="leaf"><path d="M0 0 C6 -6 14 -6 18 0 C14 6 6 6 0 0 Z"/></g>
</defs>

<g id="slideG">
<g id="slideB">
<!-- ===== Image B (back) ===== -->
<rect x="1086.5" y="804.5" width="1790.5" height="1008.5" fill="#fff" stroke="#c9c9cb" stroke-width="1.6"/>
<defs><pattern id="strip" patternUnits="userSpaceOnUse" x="1087" y="1711.5" width="104" height="52.7">
<rect width="104" height="52.7" fill="#f1e8da"/>
<g fill="none" stroke="#c8b594" stroke-width="1.4">
<circle cx="26" cy="27" r="15"/><circle cx="26" cy="27" r="8"/><circle cx="26" cy="27" r="3" fill="#d8c6a6"/>
<path d="M41 27 C52 10 62 8 72 16 C80 24 76 36 66 36 C58 36 56 28 62 24"/>
<path d="M41 27 C52 44 62 46 72 38 M72 16 C84 8 96 12 104 27 M0 27 C8 42 20 46 11 40"/>
<path d="M78 30 C86 20 96 22 98 32 C100 42 90 46 84 40" />
<path d="M14 8 L20 14 M32 8 L26 14 M50 44 L56 50 M4 48 L10 44"/>
</g>
<g fill="#d9c8a8" opacity=".6"><ellipse cx="70" cy="28" rx="4" ry="2"/><ellipse cx="90" cy="14" rx="5" ry="2.5"/><ellipse cx="8" cy="12" rx="4" ry="2"/></g>
<g fill="#8fa0c8" opacity=".6"><circle cx="20" cy="50" r="1.2"/><circle cx="52" cy="50" r="1.2"/><circle cx="84" cy="50" r="1.2"/></g>
</pattern></defs>
<rect x="1087" y="1711.5" width="1790" height="52.7" fill="url(#strip)"/>
<rect x="1087" y="1708" width="1790" height="4" fill="#f8f2ea"/>
<rect x="1087" y="1764.2" width="1790" height="48.8" fill="#234e9e"/>
<!-- medallion -->
<g fill="#e6d7bd" stroke="#cdb994" stroke-width="1">
<path d="M1944 1684 C1915 1700 1905 1740 1925 1772 C1940 1795 1965 1800 1981 1804 C1997 1800 2022 1795 2037 1772 C2057 1740 2047 1700 2018 1684 C2030 1712 2028 1750 1981 1760 C1934 1750 1932 1712 1944 1684 Z"/>
<path d="M1912 1770 C1920 1790 1940 1795 1950 1784 M2050 1770 C2042 1790 2022 1795 2012 1784" fill="none" stroke="#d8c6a4" stroke-width="6"/>
<path d="M1946 1790 C1950 1800 1962 1802 1966 1794 M2016 1790 C2012 1800 2000 1802 1996 1794" fill="none" stroke="#e8dac0" stroke-width="5"/>
</g>
<g fill="none" stroke="#cdb894" stroke-width="1.3">
<path d="M1930 1700 L1912 1690 M1926 1715 L1906 1708 M1924 1732 L1904 1728 M1926 1750 L1908 1750 M1934 1768 L1918 1772 M1944 1782 L1932 1790"/>
<path d="M2031 1700 L2049 1690 M2035 1715 L2055 1708 M2037 1732 L2057 1728 M2035 1750 L2053 1750 M2027 1768 L2043 1772 M2017 1782 L2029 1790"/>
</g>
<g fill="none" stroke="#f6efe2" stroke-width="2.2">
<path d="M1936 1694 C1922 1720 1926 1750 1946 1772 M1948 1692 C1934 1720 1938 1748 1956 1768 M1924 1716 C1920 1740 1930 1766 1950 1784"/>
<path d="M2025 1694 C2039 1720 2035 1750 2015 1772 M2013 1692 C2027 1720 2023 1748 2005 1768 M2037 1716 C2041 1740 2031 1766 2011 1784"/>
</g>
<ellipse cx="1980.6" cy="1719" rx="36" ry="40" fill="#fff"/>

</g>
<g id="slideA" clip-path="url(#clipA)">
<!-- ===== Image A (front) ===== -->
<rect x="1007" y="725" width="1786" height="938" fill="#fff"/>
<rect x="1007" y="725" width="1786" height="271" fill="#234f9f"/>
<!-- ornament strip -->
<use href="#orn" x="1199" y="990"/>
<use href="#orn" x="1595" y="990"/>
<use href="#orn" x="2192" y="990"/>
<use href="#orn" x="2578" y="990"/>
<g fill="url(#gold)">
<path d="M1007 990 C1015 975 1030 968 1045 966 C1038 975 1030 985 1022 990 Z"/>
<path d="M2793 990 C2785 975 2770 968 2755 966 C2762 975 2770 985 2778 990 Z"/>
</g>
<!-- wheat sheaves -->
<use href="#ear" transform="translate(1397 975) scale(1.5 1.2)"/>
<use href="#ear" transform="translate(1390 968) rotate(-36) scale(1.25 .85)"/>
<use href="#ear" transform="translate(1404 968) rotate(36) scale(1.25 .85)"/>
<use href="#ear" transform="translate(2384 975) scale(1.5 1.2)"/>
<use href="#ear" transform="translate(2377 968) rotate(-36) scale(1.25 .85)"/>
<use href="#ear" transform="translate(2391 968) rotate(36) scale(1.25 .85)"/>
<!-- emblem side wheat -->
<use href="#ear" transform="translate(1788 948) rotate(-64) scale(1.2 .75)"/>
<use href="#ear" transform="translate(1790 945) rotate(-47) scale(1.35 .9)"/>
<use href="#ear" transform="translate(1792 942) rotate(-25) scale(1.35 .95)"/>
<use href="#ear" transform="translate(1796 940) rotate(-11) scale(1.3 .95)"/>
<use href="#ear" transform="translate(2012 948) rotate(64) scale(1.2 .75)"/>
<use href="#ear" transform="translate(2010 945) rotate(47) scale(1.35 .9)"/>
<use href="#ear" transform="translate(2008 942) rotate(25) scale(1.35 .95)"/>
<use href="#ear" transform="translate(2004 940) rotate(11) scale(1.3 .95)"/>
<!-- light line -->
<rect x="1007" y="997" width="1786" height="4.5" fill="#e6d8bb"/><rect x="1007" y="1001.5" width="1786" height="2" fill="#2a46a0"/>
<!-- dark band -->
<rect x="1007" y="1003.5" width="1786" height="92.5" fill="#27328b"/>
<!-- emblem -->
<g>
<!-- wreath -->
<g>
<path d="M1850 765 C1818 800 1800 860 1800 920 C1800 980 1840 1012 1900 1016 C1960 1012 2000 980 2000 920 C2000 860 1982 800 1950 765 C1940 790 1945 800 1954 830 C1968 880 1966 940 1950 970 C1935 995 1915 1000 1900 1000 C1885 1000 1865 995 1850 970 C1834 940 1832 880 1846 830 C1855 800 1860 790 1850 765 Z" fill="#245c30"/>
<ellipse cx="1835" cy="773" rx="6.9" ry="9.3" transform="rotate(-16 1835 773)" fill="#50ae56"/>
<ellipse cx="1965" cy="773" rx="5.0" ry="12.3" transform="rotate(16 1965 773)" fill="#50ae56"/>
<ellipse cx="1835" cy="769" rx="6.6" ry="11.2" transform="rotate(59 1835 769)" fill="#50ae56"/>
<ellipse cx="1965" cy="769" rx="6.2" ry="12.4" transform="rotate(-59 1965 769)" fill="#50ae56"/>
<ellipse cx="1835" cy="768" rx="7.2" ry="11.7" transform="rotate(51 1835 768)" fill="#50ae56"/>
<ellipse cx="1965" cy="768" rx="5.2" ry="12.0" transform="rotate(-51 1965 768)" fill="#50ae56"/>
<ellipse cx="1834" cy="788" rx="6.4" ry="11.9" transform="rotate(-56 1834 788)" fill="#266a32"/>
<ellipse cx="1966" cy="788" rx="7.6" ry="11.9" transform="rotate(56 1966 788)" fill="#266a32"/>
<ellipse cx="1840" cy="789" rx="7.9" ry="9.5" transform="rotate(36 1840 789)" fill="#50ae56"/>
<ellipse cx="1960" cy="789" rx="6.1" ry="9.1" transform="rotate(-36 1960 789)" fill="#50ae56"/>
<ellipse cx="1832" cy="787" rx="6.3" ry="12.3" transform="rotate(21 1832 787)" fill="#266a32"/>
<ellipse cx="1968" cy="787" rx="6.7" ry="11.1" transform="rotate(-21 1968 787)" fill="#266a32"/>
<ellipse cx="1824" cy="805" rx="7.6" ry="13.0" transform="rotate(-20 1824 805)" fill="#348a40"/>
<ellipse cx="1976" cy="805" rx="7.0" ry="9.7" transform="rotate(20 1976 805)" fill="#348a40"/>
<ellipse cx="1833" cy="814" rx="7.1" ry="9.8" transform="rotate(49 1833 814)" fill="#348a40"/>
<ellipse cx="1967" cy="814" rx="7.5" ry="11.3" transform="rotate(-49 1967 814)" fill="#348a40"/>
<ellipse cx="1822" cy="803" rx="5.3" ry="12.2" transform="rotate(42 1822 803)" fill="#50ae56"/>
<ellipse cx="1978" cy="803" rx="6.2" ry="9.6" transform="rotate(-42 1978 803)" fill="#50ae56"/>
<ellipse cx="1816" cy="829" rx="6.8" ry="12.0" transform="rotate(45 1816 829)" fill="#348a40"/>
<ellipse cx="1984" cy="829" rx="6.1" ry="11.3" transform="rotate(-45 1984 829)" fill="#348a40"/>
<ellipse cx="1821" cy="831" rx="8.0" ry="10.2" transform="rotate(-27 1821 831)" fill="#43a04c"/>
<ellipse cx="1979" cy="831" rx="5.2" ry="11.4" transform="rotate(27 1979 831)" fill="#43a04c"/>
<ellipse cx="1811" cy="822" rx="5.5" ry="9.2" transform="rotate(-11 1811 822)" fill="#266a32"/>
<ellipse cx="1989" cy="822" rx="7.6" ry="10.3" transform="rotate(11 1989 822)" fill="#266a32"/>
<ellipse cx="1825" cy="851" rx="7.6" ry="10.5" transform="rotate(-15 1825 851)" fill="#50ae56"/>
<ellipse cx="1975" cy="851" rx="7.6" ry="11.7" transform="rotate(15 1975 851)" fill="#50ae56"/>
<ellipse cx="1808" cy="852" rx="6.3" ry="11.9" transform="rotate(37 1808 852)" fill="#266a32"/>
<ellipse cx="1992" cy="852" rx="5.7" ry="10.2" transform="rotate(-37 1992 852)" fill="#266a32"/>
<ellipse cx="1826" cy="846" rx="7.4" ry="12.9" transform="rotate(6 1826 846)" fill="#348a40"/>
<ellipse cx="1974" cy="846" rx="5.9" ry="10.5" transform="rotate(-6 1974 846)" fill="#348a40"/>
<ellipse cx="1814" cy="862" rx="6.4" ry="11.7" transform="rotate(16 1814 862)" fill="#266a32"/>
<ellipse cx="1986" cy="862" rx="6.1" ry="11.8" transform="rotate(-16 1986 862)" fill="#266a32"/>
<ellipse cx="1817" cy="860" rx="7.9" ry="10.0" transform="rotate(-53 1817 860)" fill="#348a40"/>
<ellipse cx="1983" cy="860" rx="6.4" ry="11.4" transform="rotate(53 1983 860)" fill="#348a40"/>
<ellipse cx="1808" cy="864" rx="7.5" ry="10.1" transform="rotate(-22 1808 864)" fill="#266a32"/>
<ellipse cx="1992" cy="864" rx="7.4" ry="9.4" transform="rotate(22 1992 864)" fill="#266a32"/>
<ellipse cx="1816" cy="892" rx="5.9" ry="9.9" transform="rotate(22 1816 892)" fill="#43a04c"/>
<ellipse cx="1984" cy="892" rx="7.4" ry="10.0" transform="rotate(-22 1984 892)" fill="#43a04c"/>
<ellipse cx="1804" cy="885" rx="6.8" ry="12.8" transform="rotate(24 1804 885)" fill="#348a40"/>
<ellipse cx="1996" cy="885" rx="7.0" ry="9.9" transform="rotate(-24 1996 885)" fill="#348a40"/>
<ellipse cx="1816" cy="892" rx="7.7" ry="10.8" transform="rotate(-50 1816 892)" fill="#43a04c"/>
<ellipse cx="1984" cy="892" rx="5.7" ry="9.5" transform="rotate(50 1984 892)" fill="#43a04c"/>
<ellipse cx="1809" cy="902" rx="7.6" ry="10.4" transform="rotate(37 1809 902)" fill="#43a04c"/>
<ellipse cx="1991" cy="902" rx="7.5" ry="9.3" transform="rotate(-37 1991 902)" fill="#43a04c"/>
<ellipse cx="1810" cy="907" rx="6.4" ry="11.5" transform="rotate(-9 1810 907)" fill="#266a32"/>
<ellipse cx="1990" cy="907" rx="5.9" ry="11.3" transform="rotate(9 1990 907)" fill="#266a32"/>
<ellipse cx="1799" cy="905" rx="7.8" ry="12.5" transform="rotate(-36 1799 905)" fill="#50ae56"/>
<ellipse cx="2001" cy="905" rx="8.0" ry="10.7" transform="rotate(36 2001 905)" fill="#50ae56"/>
<ellipse cx="1819" cy="931" rx="7.5" ry="11.7" transform="rotate(-33 1819 931)" fill="#50ae56"/>
<ellipse cx="1981" cy="931" rx="6.6" ry="10.2" transform="rotate(33 1981 931)" fill="#50ae56"/>
<ellipse cx="1807" cy="923" rx="5.4" ry="10.0" transform="rotate(-52 1807 923)" fill="#266a32"/>
<ellipse cx="1993" cy="923" rx="5.1" ry="12.2" transform="rotate(52 1993 923)" fill="#266a32"/>
<ellipse cx="1810" cy="922" rx="6.7" ry="9.1" transform="rotate(46 1810 922)" fill="#50ae56"/>
<ellipse cx="1990" cy="922" rx="7.2" ry="9.7" transform="rotate(-46 1990 922)" fill="#50ae56"/>
<ellipse cx="1810" cy="948" rx="5.2" ry="12.7" transform="rotate(3 1810 948)" fill="#50ae56"/>
<ellipse cx="1990" cy="948" rx="5.3" ry="9.5" transform="rotate(-3 1990 948)" fill="#50ae56"/>
<ellipse cx="1823" cy="946" rx="6.1" ry="9.8" transform="rotate(37 1823 946)" fill="#348a40"/>
<ellipse cx="1977" cy="946" rx="6.6" ry="12.3" transform="rotate(-37 1977 946)" fill="#348a40"/>
<ellipse cx="1807" cy="950" rx="7.5" ry="9.0" transform="rotate(51 1807 950)" fill="#43a04c"/>
<ellipse cx="1993" cy="950" rx="6.9" ry="12.5" transform="rotate(-51 1993 950)" fill="#43a04c"/>
<ellipse cx="1813" cy="963" rx="5.2" ry="10.3" transform="rotate(-28 1813 963)" fill="#50ae56"/>
<ellipse cx="1987" cy="963" rx="7.5" ry="12.4" transform="rotate(28 1987 963)" fill="#50ae56"/>
<ellipse cx="1828" cy="961" rx="7.9" ry="12.4" transform="rotate(-54 1828 961)" fill="#50ae56"/>
<ellipse cx="1972" cy="961" rx="5.3" ry="11.0" transform="rotate(54 1972 961)" fill="#50ae56"/>
<ellipse cx="1818" cy="964" rx="6.8" ry="10.4" transform="rotate(-18 1818 964)" fill="#50ae56"/>
<ellipse cx="1982" cy="964" rx="5.6" ry="10.3" transform="rotate(18 1982 964)" fill="#50ae56"/>
<ellipse cx="1826" cy="985" rx="7.4" ry="11.3" transform="rotate(26 1826 985)" fill="#50ae56"/>
<ellipse cx="1974" cy="985" rx="5.1" ry="10.8" transform="rotate(-26 1974 985)" fill="#50ae56"/>
<ellipse cx="1837" cy="984" rx="6.9" ry="10.7" transform="rotate(16 1837 984)" fill="#348a40"/>
<ellipse cx="1963" cy="984" rx="6.1" ry="11.0" transform="rotate(-16 1963 984)" fill="#348a40"/>
<ellipse cx="1838" cy="983" rx="5.1" ry="9.9" transform="rotate(23 1838 983)" fill="#50ae56"/>
<ellipse cx="1962" cy="983" rx="5.8" ry="11.4" transform="rotate(-23 1962 983)" fill="#50ae56"/>
<ellipse cx="1858" cy="995" rx="7.8" ry="10.5" transform="rotate(-44 1858 995)" fill="#348a40"/>
<ellipse cx="1942" cy="995" rx="7.7" ry="12.2" transform="rotate(44 1942 995)" fill="#348a40"/>
<ellipse cx="1847" cy="998" rx="7.0" ry="11.9" transform="rotate(-45 1847 998)" fill="#50ae56"/>
<ellipse cx="1953" cy="998" rx="6.7" ry="9.4" transform="rotate(45 1953 998)" fill="#50ae56"/>
<ellipse cx="1854" cy="992" rx="5.1" ry="9.4" transform="rotate(-43 1854 992)" fill="#50ae56"/>
<ellipse cx="1946" cy="992" rx="5.3" ry="12.5" transform="rotate(43 1946 992)" fill="#50ae56"/>
<ellipse cx="1866" cy="1000" rx="5.1" ry="9.5" transform="rotate(41 1866 1000)" fill="#348a40"/>
<ellipse cx="1934" cy="1000" rx="6.4" ry="11.8" transform="rotate(-41 1934 1000)" fill="#348a40"/>
<ellipse cx="1868" cy="1004" rx="5.3" ry="12.0" transform="rotate(-49 1868 1004)" fill="#43a04c"/>
<ellipse cx="1932" cy="1004" rx="7.8" ry="9.2" transform="rotate(49 1932 1004)" fill="#43a04c"/>
<ellipse cx="1868" cy="1007" rx="8.0" ry="11.6" transform="rotate(39 1868 1007)" fill="#43a04c"/>
<ellipse cx="1932" cy="1007" rx="6.4" ry="11.8" transform="rotate(-39 1932 1007)" fill="#43a04c"/>
</g>
<path d="M1818 830 C1835 850 1846 870 1850 900" stroke="#e2e24a" stroke-width="6" fill="none"/>
<path d="M1982 830 C1965 850 1954 870 1950 900" stroke="#e2e24a" stroke-width="6" fill="none"/>
<path d="M1812 880 C1826 898 1838 912 1842 935" stroke="#6fb0d8" stroke-width="5" fill="none"/>
<path d="M1988 880 C1974 898 1962 912 1958 935" stroke="#6fb0d8" stroke-width="5" fill="none"/>
<path d="M1826 915 C1838 928 1846 942 1850 958" stroke="#e2e24a" stroke-width="5" fill="none"/>
<path d="M1974 915 C1962 928 1954 942 1950 958" stroke="#e2e24a" stroke-width="5" fill="none"/>
<!-- shield -->
<path d="M1877 769 H1925 V781 C1935 782 1945 786 1948 795 C1955 798 1956 808 1950 812 L1950 920 C1950 935 1915 935 1901 950 C1887 935 1852 935 1852 920 L1852 812 C1846 808 1847 798 1854 795 C1857 786 1867 782 1877 781 Z" fill="#3d68b4" stroke="#e4ea4c" stroke-width="3.2"/>
<path d="M1856 822 C1870 812 1932 812 1946 822" fill="none" stroke="#e4ea4c" stroke-width="2.5"/>
<!-- horse, book, symbol -->
<path d="M1886 798 C1888 791 1898 790 1906 791 L1911 784 L1915 782 L1918 785 L1914 789 L1912 795 C1911 799 1908 800 1906 801 L1909 807 L1906 807 L1902 801 L1893 801 L1891 807 L1888 807 L1889 801 C1885 802 1882 800 1880 797 Z" fill="#e4ea4c"/>
<rect x="1869" y="798" width="11" height="11" fill="none" stroke="#e4ea4c" stroke-width="2"/>
<path d="M1927 797 L1934 804 L1927 811 L1920 804 Z" fill="none" stroke="#e4ea4c" stroke-width="2"/>
<!-- wheat in shield -->
<g fill="#d8dc5c">
<ellipse cx="1901" cy="840" rx="6" ry="18"/>
<ellipse cx="1882" cy="848" rx="6" ry="16" transform="rotate(-30 1882 848)"/>
<ellipse cx="1920" cy="848" rx="6" ry="16" transform="rotate(30 1920 848)"/>
</g>
<path d="M1901 858 V895 M1888 862 L1901 885 L1914 862 M1890 900 L1901 885 L1912 900" stroke="#d8dc5c" stroke-width="2.4" fill="none"/>
<text x="1901" y="917" text-anchor="middle" font-family="Liberation Sans" font-weight="bold" font-size="16" fill="#e4ea4c">НУБІП</text>
<!-- orange ribbon -->
<path d="M1793 952 L1875 950 L1878 975 L1796 985 Z" fill="#e0a040" stroke="#8a5a20" stroke-width="1"/>
<path d="M2009 952 L1927 950 L1924 975 L2006 985 Z" fill="#e0a040" stroke="#8a5a20" stroke-width="1"/>
<path d="M1868 967 L1934 967 L1934 985 L1868 985 Z" fill="#d89238" stroke="#8a5a20" stroke-width="1"/>
<path d="M1800 966 H1868 M1934 966 H2002 M1874 977 H1928" stroke="#6a4a28" stroke-width="2" stroke-dasharray="3 2"/>
<!-- green lower leaves -->
<path d="M1850 990 C1862 1010 1880 1018 1890 1008 M1950 990 C1938 1010 1920 1018 1910 1008" stroke="#3f9a48" stroke-width="7" fill="none"/>
<!-- berries -->
<g fill="#e03030">
<circle cx="1885" cy="1008" r="3.2"/><circle cx="1893" cy="1008" r="3.2"/><circle cx="1901" cy="1008" r="3.2"/><circle cx="1909" cy="1008" r="3.2"/><circle cx="1917" cy="1008" r="3.2"/>
<circle cx="1881" cy="1016" r="3.2"/><circle cx="1889" cy="1016" r="3.2"/><circle cx="1897" cy="1016" r="3.2"/><circle cx="1905" cy="1016" r="3.2"/><circle cx="1913" cy="1016" r="3.2"/><circle cx="1921" cy="1016" r="3.2"/>
<circle cx="1885" cy="1024" r="3.2"/><circle cx="1893" cy="1024" r="3.2"/><circle cx="1901" cy="1024" r="3.2"/><circle cx="1909" cy="1024" r="3.2"/><circle cx="1917" cy="1024" r="3.2"/>
</g>
</g>
<!-- cream lines under band -->
<rect x="1007" y="1096" width="1786" height="5" fill="#edf0da"/>
<rect x="1007" y="1101" width="1786" height="5" fill="#e2d7c6"/>
<rect x="1007" y="1106" width="1786" height="7" fill="#f6ecdb"/>
<rect x="1007" y="1113" width="1786" height="4" fill="#e6dab5"/>

<!-- pillars (left) -->
<g id="pillarSet">
<g fill="none" stroke="#e6dbc6" stroke-width="2.4">
<path d="M1007 1164 H1277 M1007 1182 H1277"/>
<path d="M1082 1419 H1277 M1082 1433 H1277 M1007 1449 H1277"/>
<path d="M1007 1478 H1175 M1007 1493 H1175"/>
<path d="M1007 1545 H1195 M1007 1561 H1195" stroke-width="3"/>
</g>
<!-- capital & column -->
<g fill="#fbf8f3" stroke="#e2d6bf" stroke-width="1.8">
<path d="M1106 1215 L1110 1196 L1118 1204 L1126 1190 L1134 1202 L1147 1188 L1160 1202 L1168 1190 L1176 1204 L1184 1196 L1188 1215 Z"/>
<rect x="1104" y="1217" width="86" height="8"/><rect x="1108" y="1226" width="78" height="6"/><rect x="1112" y="1232" width="70" height="7"/>
<rect x="1116" y="1239" width="63" height="137"/>
<rect x="1110" y="1376" width="75" height="8"/><rect x="1104" y="1384" width="87" height="9"/><rect x="1100" y="1393" width="95" height="12"/><rect x="1094" y="1405" width="107" height="14"/>
</g>
<g stroke="#e6dcc8" stroke-width="1.6" fill="none"><path d="M1126 1247 V1370 M1139.5 1247 V1370 M1154.6 1247 V1370 M1166.7 1247 V1370"/></g>
<!-- acanthus sprays -->
<g filter="url(#pb)"><ellipse cx="1058" cy="1300" rx="48" ry="105" fill="#f5f0e6"/><ellipse cx="1232" cy="1300" rx="42" ry="105" fill="#f5f0e6"/></g>
<g fill="none" stroke="#e6dac4" stroke-width="1.3">
<path d="M1010 1200 C1030 1230 1020 1260 1040 1290 C1060 1320 1050 1360 1070 1390"/>
<path d="M1030 1196 C1050 1216 1066 1250 1062 1280 C1058 1310 1078 1350 1096 1372"/>
<path d="M1007 1320 C1024 1330 1040 1352 1046 1380 C1050 1398 1060 1410 1076 1416"/>
<path d="M1014 1230 C1004 1250 1012 1272 1030 1276 C1046 1280 1052 1262 1040 1256"/>
<path d="M1030 1386 C1020 1372 1030 1356 1044 1362 C1056 1368 1050 1384 1040 1382"/>
<path d="M1274 1200 C1254 1230 1264 1260 1244 1290 C1224 1320 1234 1360 1214 1390"/>
<path d="M1256 1196 C1236 1216 1220 1250 1224 1280 C1228 1310 1208 1350 1190 1372"/>
<path d="M1277 1320 C1260 1330 1244 1352 1238 1380 C1234 1398 1224 1410 1208 1416"/>
<path d="M1270 1230 C1280 1250 1272 1272 1254 1276 C1238 1280 1232 1262 1244 1256"/>
<path d="M1254 1386 C1264 1372 1254 1356 1240 1362 C1228 1368 1234 1384 1244 1382"/>
</g>
<g id="sprayL" fill="#f5efe4" stroke="#dfd1b6" stroke-width="1.5" opacity=".95">
<path d="M1112 1400 C1090 1370 1060 1320 1048 1270 C1040 1236 1050 1206 1075 1196 C1092 1190 1104 1204 1098 1218 C1092 1232 1074 1226 1078 1214 C1066 1230 1068 1270 1080 1310 C1090 1345 1104 1375 1114 1390 Z"/>
<path d="M1108 1395 C1080 1375 1040 1340 1020 1300 C1004 1268 1010 1232 1032 1220 C1048 1212 1062 1224 1056 1238 C1050 1250 1034 1244 1038 1232 C1026 1248 1030 1282 1048 1315 C1066 1346 1092 1372 1110 1386 Z"/>
<path d="M1112 1340 C1100 1300 1096 1260 1104 1230 C1108 1214 1118 1206 1126 1212" />
<path d="M1060 1405 C1040 1390 1022 1370 1010 1345 M1090 1408 C1060 1400 1030 1392 1007 1380" fill="none"/>
<path d="M1007 1270 C1020 1290 1030 1320 1030 1350 C1030 1380 1020 1400 1007 1412 Z" fill="#f7f2ea"/>
<path d="M1055 1250 C1065 1290 1080 1330 1100 1365 M1035 1270 C1050 1310 1070 1345 1095 1378 M1085 1225 C1085 1270 1095 1320 1108 1360" fill="none" stroke="#e4d8c0" stroke-width="1.2"/>
<circle cx="1084" cy="1206" r="6" fill="none"/><circle cx="1042" cy="1230" r="6" fill="none"/>
</g>
<use href="#sprayL" transform="translate(2295 0) scale(-1 1)"/>
<!-- lower scrolls -->
<g fill="#f4eee3" stroke="#ddd0b6" stroke-width="1.5">
<path d="M1178 1466 C1186 1452 1220 1446 1246 1458 C1268 1470 1274 1500 1264 1524 C1252 1546 1216 1546 1202 1526 C1192 1510 1202 1490 1220 1494 C1236 1498 1234 1518 1222 1518 C1214 1518 1212 1508 1218 1504"/>
<path d="M1190 1470 C1200 1490 1196 1510 1182 1520 M1250 1462 C1262 1440 1272 1436 1277 1440" fill="none"/>
<path d="M1012 1562 C1046 1546 1088 1558 1104 1588 C1116 1618 1096 1650 1066 1650 C1040 1648 1030 1626 1044 1610 C1058 1598 1076 1610 1068 1624 C1064 1630 1056 1628 1056 1622"/>
<path d="M1104 1560 C1118 1548 1130 1550 1140 1556 C1128 1560 1118 1566 1110 1576 Z M1010 1530 C1020 1540 1026 1552 1026 1566" fill="#f4eee3"/>
<path d="M1007 1600 C1030 1590 1040 1620 1022 1640" fill="none"/>
</g>
</g>
<!-- pillars (right mirrored around 1900) -->
<g transform="translate(3800 0) scale(-1 1)"><use href="#pillarSet"/></g>
<!-- frame -->
<path d="M1313 1124 H2486 A36 36 0 0 0 2522 1160 V1561 A36 36 0 0 0 2486 1597 H1313 A36 36 0 0 0 1277 1561 V1160 A36 36 0 0 0 1313 1124 Z" fill="#fff" stroke="#e9dfcb" stroke-width="3"/>
<path d="M1325 1139 H2475 A36 36 0 0 0 2511 1175 V1548 A36 36 0 0 0 2475 1584 H1325 A36 36 0 0 0 1289 1548 V1175 A36 36 0 0 0 1325 1139 Z" fill="#fff" stroke="#e2d3b4" stroke-width="11"/>
<text transform="translate(1134 1074) scale(0.655 1)" font-family="Liberation Serif" font-size="43" font-weight="bold" fill="#f2efe8" textLength="2345" lengthAdjust="spacing">НАЦІОНАЛЬНИЙ УНІВЕРСИТЕТ БІОРЕСУРСІВ І ПРИРОДОКОРИСТУВАННЯ УКРАЇНИ</text>
<text x="1337.0" y="1214.0" font-family="Liberation Serif" font-size="58" font-weight="bold" font-style="normal" fill="#000" textLength="1091.5" lengthAdjust="spacingAndGlyphs" >ДІДЖІТАЛ-МАРКЕТИНГ: СУТНІСТЬ,</text>
<text x="1439.0" y="1277.0" font-family="Liberation Serif" font-size="58" font-weight="bold" font-style="normal" fill="#000" textLength="884.6" lengthAdjust="spacingAndGlyphs" >ПЕРЕВАГИ ТА ВИКЛИКИ, ЯКІ</text>
<text x="1517.0" y="1341.0" font-family="Liberation Serif" font-size="58" font-weight="bold" font-style="normal" fill="#000" textLength="726.1" lengthAdjust="spacingAndGlyphs" >НЕОБХІДНО ВИРІШИТИ</text>
<text x="1824.0" y="1499.0" font-family="Liberation Sans" font-size="47" font-weight="bold" font-style="italic" fill="#0e1f6c" textLength="658.3" lengthAdjust="spacingAndGlyphs" stroke="#0e1f6c" stroke-width="1.4">Професор Збарський В.К.</text>
<text x="2088.0" y="1579.0" font-family="Liberation Sans" font-size="47" font-weight="bold" font-style="italic" fill="#0e1f6c" textLength="392.5" lengthAdjust="spacingAndGlyphs" stroke="#0e1f6c" stroke-width="1.4">zbarsky@ukr.net</text>
</g>
</g>
<!-- spell underline -->
<path d="M2097 1506 l4 -3 l4 3 l4 -3 l4 3 l4 -3 l4 3 l4 -3 l4 3 l4 -3 l4 3 l4 -3 l4 3 l4 -3 l4 3 l4 -3 l4 3 l4 -3 l4 3 l4 -3 l4 3 l4 -3 l4 3 l4 -3 l4 3 l4 -3 l4 3 l4 -3 l4 3 l4 -3 l4 3 l4 -3 l4 3 l4 -3 l4 3 l4 -3 l4 3 l4 -3 l4 3 l4 -3 l4 3 l4 -3 l4 3 l4 -3 l4 3 l4 -3 l4 3 l4 -3 l4 3 l4 -3 l4 3 l4 -3 l4 3 l4 -3 l4 3 l4 -3 l4 3 l4 -3 l4 3 l4 -3 l4 3 l4 -3 l4 3 l4 -3 l4 3 l4 -3 l4 3 l4 -3 l4 3 l4 -3 l4 3" fill="none" stroke="#e5484d" stroke-width="1.2"/>
</svg>
<!-- sparkle designer button -->
<div class="a" style="left:1088.5px;top:705px;width:79px;height:80px;background:#fff;border-radius:18px;box-shadow:0 0 0 1px rgba(0,0,0,.06),0 1px 2px rgba(0,0,0,.12)"></div>
<svg style="left:1100px;top:722px" width="52" height="52" viewBox="0 0 52 52">
<path d="M29.3 3.5 Q31.5 12.3 40.3 14.5 Q31.5 16.7 29.3 25.5 Q27.1 16.7 18.3 14.5 Q27.1 12.3 29.3 3.5 Z" fill="#1f1f1f"/>
<path d="M39.9 21.5 Q41.2 26.7 46.4 28 Q41.2 29.3 39.9 34.5 Q38.6 29.3 33.4 28 Q38.6 26.7 39.9 21.5 Z" fill="#1f1f1f"/>
<g stroke="#222" stroke-width="3" stroke-linecap="round" fill="none">
<path d="M9.5 30 L12.5 27.5 M15 25.5 L19 22"/><path d="M19.5 32.5 L25 26.5"/><path d="M11.5 39 L14.5 36.5"/><path d="M21.5 41.5 L23.5 39.5 M25.5 37 L27.5 34.8"/>
</g>
</svg>


<div class="t" style="left:122.0px;top:285.4px;font-size:28.5px;color:#b3b3b5;transform:scaleX(1.0451);">Автозбереження</div>
<div class="t" style="left:918.1px;top:284.9px;font-size:32px;color:#b3b3b5;transform:scaleX(0.9396);">Збарський. Вебінар</div>
<div class="t" style="left:1229.0px;top:284.9px;font-size:32px;color:#b3b3b5;transform:scaleX(0.9528);">Збережено</div>
<div class="t" style="left:1622.9px;top:285.1px;font-size:33px;color:#b2b2b4;transform:scaleX(1.0301);">Пошук</div>
<div class="t" style="left:41.2px;top:384.4px;font-size:32px;color:#2a2a2a;transform:scaleX(0.9526);">Файл</div>
<div class="t" style="left:169.0px;top:384.4px;font-size:32px;font-weight:bold;color:#1c1c1c;transform:scaleX(1.0164);">Основне</div>
<div class="t" style="left:363.2px;top:384.4px;font-size:32px;color:#2a2a2a;transform:scaleX(0.9795);">Вставлення</div>
<div class="t" style="left:593.2px;top:384.4px;font-size:32px;color:#2a2a2a;transform:scaleX(1.0557);">Малювання</div>
<div class="t" style="left:833.6px;top:384.4px;font-size:32px;color:#2a2a2a;transform:scaleX(1.0425);">Конструктор</div>
<div class="t" style="left:1083.9px;top:384.4px;font-size:32px;color:#2a2a2a;transform:scaleX(1.0489);">Переходи</div>
<div class="t" style="left:1295.0px;top:384.4px;font-size:32px;color:#2a2a2a;transform:scaleX(1.0129);">Анімація</div>
<div class="t" style="left:1486.0px;top:384.4px;font-size:32px;color:#2a2a2a;transform:scaleX(1.0212);">Показ слайдів</div>
<div class="t" style="left:1762.4px;top:384.4px;font-size:32px;color:#2a2a2a;transform:scaleX(0.9920);">Записати</div>
<div class="t" style="left:1957.7px;top:384.4px;font-size:32px;color:#2a2a2a;transform:scaleX(1.0036);">Рецензування</div>
<div class="t" style="left:2227.5px;top:384.4px;font-size:32px;color:#2a2a2a;transform:scaleX(1.0317);">Подання</div>
<div class="t" style="left:2419.2px;top:384.4px;font-size:32px;color:#2a2a2a;transform:scaleX(1.0164);">Довідка</div>
<div class="t" style="left:2833.3px;top:383.6px;font-size:32.5px;color:#262626;transform:scaleX(0.9478);">Записати</div>
<div class="t" style="left:56.0px;top:549.3px;font-size:30px;color:#b8b8ba;transform:scaleX(0.9596);">Вставити</div>
<div class="t" style="left:360.2px;top:546.8px;font-size:31px;color:#242424;transform:scaleX(0.9596);">Створити</div>
<div class="t" style="left:373.1px;top:586.8px;font-size:31px;color:#242424;transform:scaleX(0.9220);">слайд</div>
<div class="t" style="left:535.8px;top:546.8px;font-size:31px;color:#242424;transform:scaleX(0.9496);">Новий слайд за</div>
<div class="t" style="left:508.3px;top:586.8px;font-size:31px;color:#242424;transform:scaleX(1.0234);">допомогою Copilot</div>
<div class="t" style="left:68.5px;top:650.3px;font-size:28px;color:#242424;transform:scaleX(1.0235);">Буфер обміну</div>
<div class="t" style="left:575.6px;top:650.5px;font-size:28px;color:#242424;transform:scaleX(0.9824);">Слайди</div>
<div class="t" style="left:1122.8px;top:650.4px;font-size:28px;color:#242424;transform:scaleX(1.0776);">Шрифт</div>
<div class="t" style="left:1645.3px;top:650.1px;font-size:28px;color:#242424;transform:scaleX(1.0177);">Абзац</div>
<div class="t" style="left:1958.0px;top:542.4px;font-size:31px;color:#242424;transform:scaleX(0.9967);">Малювання</div>
<div class="t" style="left:2169.8px;top:542.4px;font-size:31px;color:#242424;transform:scaleX(0.9523);">Редагування</div>
<div class="t" style="left:2393.5px;top:549.1px;font-size:31px;color:#242424;transform:scaleX(0.9529);">Надиктувати</div>
<div class="t" style="left:2444.3px;top:649.3px;font-size:28px;color:#242424;transform:scaleX(1.0170);">Голос</div>
<div class="t" style="left:2620.1px;top:546.4px;font-size:31px;color:#242424;transform:scaleX(0.9674);">Надбудови</div>
<div class="t" style="left:2825.0px;top:546.4px;font-size:31px;color:#242424;transform:scaleX(1.0141);">Пропозиції щодо</div>
<div class="t" style="left:2856.9px;top:586.6px;font-size:31px;color:#242424;transform:scaleX(0.9857);">оформлення</div>
<div class="t" style="left:3087.3px;top:546.4px;font-size:31px;color:#242424;transform:scaleX(1.0106);">Copilot</div>
<div class="t" style="left:2623.4px;top:649.3px;font-size:28px;color:#242424;transform:scaleX(1.0236);">Надбудови</div>
<div class="t" style="left:2958.6px;top:649.3px;font-size:28px;color:#242424;transform:scaleX(1.0848);">Copilot</div>
<div class="t" style="left:31.4px;top:730.7px;font-size:37px;color:#c4532f;transform:scaleX(0.8235);">1</div>
<div class="t" style="left:29.9px;top:981.7px;font-size:37px;color:#3a3a3a;transform:scaleX(1.0556);">2</div>
<div class="t" style="left:30.7px;top:1232.7px;font-size:37px;color:#3a3a3a;transform:scaleX(0.9611);">3</div>
<div class="t" style="left:30.0px;top:1482.7px;font-size:37px;color:#3a3a3a;transform:scaleX(1.0100);">4</div>
<div class="t" style="left:30.8px;top:1733.7px;font-size:37px;color:#3a3a3a;transform:scaleX(0.9105);">5</div>
<div class="t" style="left:29.9px;top:1982.7px;font-size:37px;color:#3a3a3a;transform:scaleX(1.1111);">6</div>
<div class="t" style="left:576.7px;top:1940.0px;font-size:40px;font-weight:bold;font-style:italic;color:#4e4e50;transform:scaleX(0.9228);">Нотатки до слайда</div>
<div class="a" style="left:0;top:2005px;width:3456px;height:2px;background:#fdfdfe"></div>
<div class="a" style="left:0;top:2007px;width:3456px;height:54px;background:#f4f4f6"></div>
<!-- accessibility icon -->
<svg style="left:713px;top:2014px" width="42" height="40" viewBox="0 0 42 40" fill="none" stroke="#404042" stroke-width="2.4">
<circle cx="20" cy="6" r="4"/><path d="M4 13 C12 16 28 16 36 13"/><path d="M14 15 V26 L9 37 M26 15 V22"/><path d="M24 27 L36 38 M36 27 L24 38" stroke-width="2.6"/>
</svg>
<!-- notes icon -->
<svg style="left:2343px;top:2011px" width="46" height="44" viewBox="0 0 46 44" fill="none" stroke="#3a3a3c" stroke-width="2.4">
<path d="M16 9 L23 3 L30 9"/><path d="M3 21 H43 M3 31 H43 M3 41 H43"/>
</svg>
<!-- normal view highlighted -->
<div class="a" style="left:2551px;top:2007px;width:100px;height:53px;background:#dddcdf"></div>
<svg style="left:2581px;top:2015px" width="40" height="36" viewBox="0 0 40 36" fill="none" stroke="#3a3a3c" stroke-width="2.4">
<rect x="3" y="3" width="33" height="30"/><path d="M11 3 V26 H36"/><rect x="16" y="8" width="14" height="11"/>
</svg>
<!-- slide sorter -->
<svg style="left:2682px;top:2018px" width="40" height="34" viewBox="0 0 40 34" fill="none" stroke="#3a3a3c" stroke-width="2.4">
<rect x="3" y="3" width="13" height="11"/><rect x="23" y="3" width="13" height="11"/><rect x="3" y="20" width="13" height="11"/><rect x="23" y="20" width="13" height="11"/>
</svg>
<!-- reading view -->
<svg style="left:2783px;top:2015px" width="38" height="38" viewBox="0 0 38 38" fill="none" stroke="#3a3a3c" stroke-width="2.4">
<path d="M3 5 H17 V33 H3 Z M21 5 H35 V33 H21 Z"/><path d="M7 12 H13 M7 18 H13 M7 24 H13 M25 12 H31 M25 18 H31 M25 24 H31"/><path d="M17 33 L19 36 L21 33"/>
</svg>
<!-- slide show -->
<svg style="left:2885px;top:2015px" width="36" height="38" viewBox="0 0 36 38" fill="none" stroke="#3a3a3c" stroke-width="2.4">
<path d="M3 3 H33 M5 3 V18 H31 V3"/><path d="M12 9 H24"/><path d="M18 18 V33 M10 33 H26"/>
</svg>
<!-- zoom slider -->
<div class="a" style="left:2969px;top:2031px;width:21px;height:2.4px;background:#3a3a3c"></div>
<div class="a" style="left:3003px;top:2033px;width:252px;height:1.6px;background:#8a8a8c"></div>
<div class="a" style="left:3130px;top:2027px;width:1.6px;height:14px;background:#6a6a6c"></div>
<div class="a" style="left:3066.5px;top:2020px;width:11.5px;height:28px;border-radius:2px;background:#5a5a5c"></div>
<div class="a" style="left:3267px;top:2031px;width:21px;height:2.4px;background:#3a3a3c"></div>
<div class="a" style="left:3276.3px;top:2022px;width:2.4px;height:21px;background:#3a3a3c"></div>
<!-- fit -->
<svg style="left:3403px;top:2011px" width="44" height="42" viewBox="0 0 44 42" fill="none" stroke="#3a3a3c" stroke-width="2.4">
<rect x="14" y="13" width="16" height="16" stroke-width="3"/><path d="M17 6 L22 2 L27 6 M17 36 L22 40 L27 36 M7 16 L3 21 L7 26 M37 16 L41 21 L37 26"/>
</svg>

<div class="t" style="left:31.1px;top:2019.0px;font-size:29px;color:#333335;transform:scaleX(0.9366);">Слайд 1 з 18</div>
<div class="t" style="left:273.4px;top:2020.5px;font-size:29px;color:#333335;transform:scaleX(1.0067);">англійська (Сполучені Штати)</div>
<div class="t" style="left:761.7px;top:2020.5px;font-size:29px;font-weight:bold;color:#3a3a3c;transform:scaleX(0.9518);">Спеціальні можливості: щось не так</div>
<div class="t" style="left:2390.6px;top:2022.1px;font-size:29px;color:#333335;transform:scaleX(1.0496);">Нотатки</div>
<div class="t" style="left:3322.5px;top:2018.5px;font-size:29px;color:#333335;transform:scaleX(0.9083);">56%</div>
<div class="a" style="left:2968px;top:160px;width:488px;height:279px;background:#2b2b2d;border-radius:22px;box-shadow:0 3px 14px rgba(0,0,0,.25)"></div>
<svg style="left:2971.5px;top:163px" width="481" height="271" viewBox="0 0 481 271">
<defs>
<clipPath id="vc"><rect width="481" height="271" rx="19"/></clipPath>
<filter id="b12" x="-50%" y="-50%" width="200%" height="200%"><feGaussianBlur stdDeviation="12"/></filter>
<filter id="b6" x="-50%" y="-50%" width="200%" height="200%"><feGaussianBlur stdDeviation="5"/></filter>
<filter id="b2" x="-20%" y="-20%" width="140%" height="140%"><feGaussianBlur stdDeviation="1.6"/></filter>
<linearGradient id="vbg" x1="0" y1="0" x2="1" y2="0">
<stop offset="0" stop-color="#c3ccc8"/><stop offset=".3" stop-color="#d2d8d4"/><stop offset=".47" stop-color="#e4e6e0"/><stop offset=".56" stop-color="#b0a890"/><stop offset=".7" stop-color="#8f6e50"/><stop offset=".85" stop-color="#6e6258"/><stop offset="1" stop-color="#7e8a8c"/>
</linearGradient>
</defs>
<g clip-path="url(#vc)">
<rect width="481" height="271" fill="url(#vbg)"/>
<g filter="url(#b12)">
<ellipse cx="90" cy="25" rx="70" ry="30" fill="#6e5e44" opacity=".85"/>
<ellipse cx="195" cy="25" rx="40" ry="30" fill="#a89072" opacity=".9"/>
<rect x="228" y="-10" width="34" height="170" fill="#f4f3ec"/>
<ellipse cx="300" cy="80" rx="30" ry="40" fill="#4f5a38" opacity=".9"/>
<ellipse cx="345" cy="30" rx="30" ry="35" fill="#c9c0b0" opacity=".8"/>
<rect x="300" y="120" width="80" height="160" fill="#8d5c38" opacity=".85"/>
<ellipse cx="410" cy="100" rx="30" ry="60" fill="#3e3a32" opacity=".85"/>
<rect x="430" y="150" width="60" height="130" fill="#8a989c" opacity=".85"/>
<ellipse cx="60" cy="180" rx="80" ry="70" fill="#cfd6d1" opacity=".8"/>
<rect x="0" y="220" width="70" height="60" fill="#8e9894" opacity=".6"/>
</g>
<!-- jacket -->
<path d="M22 271 C30 230 60 190 110 170 C130 160 140 150 150 145 L200 200 L232 155 C255 162 280 168 295 185 C305 210 312 240 318 271 Z" fill="#101211" filter="url(#b2)"/>
<!-- head -->
<g filter="url(#b2)">
<path d="M146 120 C146 90 170 78 192 78 C218 78 240 92 240 122 C242 150 238 175 230 190 C220 206 205 212 192 212 C178 212 160 204 152 190 C144 175 144 150 146 120 Z" fill="#e2b2ae"/>
<path d="M152 160 C156 190 172 208 192 210 C212 208 228 192 232 160 C225 175 212 185 192 186 C172 185 158 175 152 160 Z" fill="#d49e9c" opacity=".8"/>
<path d="M140 112 C138 80 160 63 192 63 C226 63 246 82 244 115 C244 130 242 140 240 150 C236 125 228 110 214 105 C200 100 180 102 168 106 C155 112 150 125 148 150 C143 140 140 128 140 112 Z" fill="#f1f0ee"/>
<path d="M143 118 C141 130 143 145 148 158 L152 140 Z M241 118 C243 130 241 145 236 158 L232 140 Z" fill="#e4e2e0"/>
<ellipse cx="175" cy="139" rx="11" ry="3" fill="#8a6a66" opacity=".7"/>
<ellipse cx="209" cy="141" rx="11" ry="3" fill="#8a6a66" opacity=".7"/>
<path d="M190 145 C188 158 186 166 192 168 C198 168 200 164 196 150" fill="#c99490" opacity=".6"/>
<ellipse cx="193" cy="180" rx="15" ry="5" fill="#a86868" opacity=".6"/>
</g>
<ellipse cx="286" cy="214" rx="3" ry="4" fill="#c8b070" opacity=".8"/>
<rect width="481" height="271" fill="none" stroke="rgba(0,0,0,.12)" stroke-width="6"/>
</g>
</svg>
<div class="a" style="left:2976px;top:394px;width:162px;height:40px;border-radius:9px;background:#161616"></div>

<div class="t" style="left:2979.0px;top:400.8px;font-size:25px;color:#fff;transform:scaleX(0.9862);">Ruslan Buriak</div>
</body></html>
